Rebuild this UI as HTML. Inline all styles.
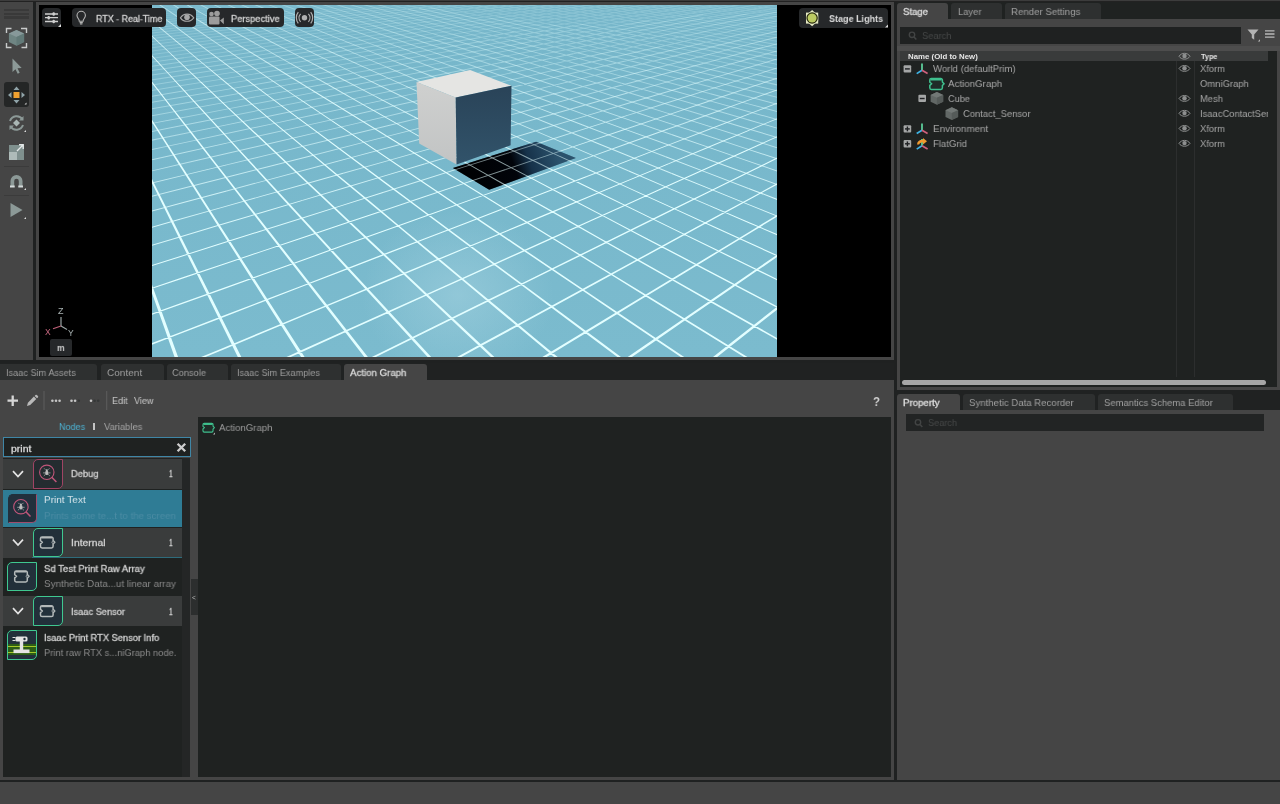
<!DOCTYPE html>
<html lang="en"><head><meta charset="utf-8"><title>Isaac Sim - Action Graph</title>
<style>
*{box-sizing:border-box;margin:0;padding:0}
html,body{width:1280px;height:804px;overflow:hidden;background:#454545;font-family:"Liberation Sans",sans-serif;font-size:10px;color:#c8c8c8}
.a{position:absolute}
.t{position:absolute;white-space:nowrap;transform-origin:0 0;display:block;will-change:transform}
.tab{position:absolute;height:17px;border-radius:3px 3px 0 0;background:#2d2f2f;color:#9a9a9a;font-size:10px;line-height:17px;padding-left:6px;white-space:nowrap}
.tab.on{background:#454545;color:#dcdcdc}
svg{position:absolute;overflow:visible}
</style></head><body>
<!-- window frame / gaps -->
<div class="a" style="left:0;top:0;width:1280px;height:1px;background:#3c3c3c"></div>
<div class="a" style="left:0;top:1px;width:1280px;height:1px;background:#222"></div>
<div class="a" style="left:33px;top:2px;width:3px;height:358px;background:#1f2121"></div>
<div class="a" style="left:0;top:360px;width:897px;height:3px;background:#1f2121"></div>
<div class="a" style="left:894px;top:2px;width:3px;height:780px;background:#1f2121"></div>
<svg class="a" style="left:38px;top:5px" width="853" height="352" viewBox="38 5 853 352">
<defs><clipPath id="vc"><rect x="152" y="5" width="625" height="352"/></clipPath>
<clipPath id="sc"><path d="M452.9 168.1L536.1 141.7L575.9 158.1L489.2 189.8Z"/></clipPath>
<radialGradient id="spec" gradientUnits="userSpaceOnUse" cx="458" cy="295" r="120" gradientTransform="translate(458 295) scale(.8 .7) translate(-458 -295)"><stop offset="0" stop-color="#a4d2e0" stop-opacity=".55"/><stop offset="1" stop-color="#a4d2e0" stop-opacity="0"/></radialGradient>
<linearGradient id="gnd" x1="0" y1="5" x2="0" y2="357" gradientUnits="userSpaceOnUse"><stop offset="0" stop-color="#76b6ca"/><stop offset="1" stop-color="#7bbbce"/></linearGradient>
<linearGradient id="shd" gradientUnits="userSpaceOnUse" x1="471" y1="179" x2="556" y2="150"><stop offset="0" stop-color="#000103"/><stop offset=".5" stop-color="#01040a"/><stop offset=".68" stop-color="#16324a"/><stop offset="1" stop-color="#2b526c"/></linearGradient>
<linearGradient id="cl" gradientUnits="userSpaceOnUse" x1="0" y1="82" x2="0" y2="164"><stop offset="0" stop-color="#cfd0cf"/><stop offset="1" stop-color="#c2c4c4"/></linearGradient>
<linearGradient id="cr" gradientUnits="userSpaceOnUse" x1="0" y1="90" x2="0" y2="164"><stop offset="0" stop-color="#2a4459"/><stop offset="1" stop-color="#31536a"/></linearGradient>
</defs>
<rect x="39" y="5" width="852" height="352" fill="#000"/>
<g clip-path="url(#vc)">
<rect x="152" y="5" width="625" height="352" fill="url(#gnd)"/>
<rect x="152" y="5" width="625" height="352" fill="url(#spec)"/>
<path d="M452.9 168.1L536.1 141.7L575.9 158.1L489.2 189.8Z" fill="url(#shd)"/>
<path d="M656.8 -1.5L701.2 4.7L701.3 3.8L656.9 -2.5ZM669.5 -1.5L709.6 4.0L709.8 3.1L669.6 -2.5ZM682.2 -1.5L718.1 3.3L718.2 2.4L682.3 -2.5ZM718.1 3.3L754.0 8.2L754.1 7.2L718.2 2.4ZM694.9 -1.5L726.6 2.7L726.7 1.7L695.0 -2.5ZM726.6 2.7L758.2 6.9L758.4 5.9L726.7 1.7ZM707.5 -1.5L748.7 3.8L748.9 2.9L707.7 -2.5ZM748.7 3.8L789.9 9.2L790.1 8.3L748.9 2.9ZM720.2 -1.5L755.1 2.9L755.2 2.0L720.3 -2.5ZM755.1 2.9L789.9 7.4L790.1 6.4L755.2 2.0ZM732.9 -1.5L761.4 2.1L761.5 1.1L733.0 -2.5ZM761.4 2.1L789.9 5.6L790.1 4.7L761.5 1.1ZM745.6 -1.5L789.9 3.9L790.1 3.0L745.7 -2.5ZM758.3 -1.5L789.9 2.3L790.1 1.4L758.4 -2.5ZM771.0 -1.5L789.9 0.7L790.1 -0.2L771.1 -2.5ZM178.2 -2.5L140.0 0.6L140.0 1.6L178.3 -1.5ZM195.3 -2.5L167.7 -0.2L167.7 0.8L195.4 -1.5ZM167.7 -0.2L140.0 2.1L140.0 3.1L167.7 0.8ZM212.4 -2.5L176.2 0.6L176.3 1.5L212.5 -1.5ZM176.2 0.6L140.0 3.6L140.0 4.6L176.3 1.5ZM229.5 -2.5L184.7 1.3L184.8 2.3L229.6 -1.5ZM184.7 1.3L140.0 5.2L140.0 6.1L184.8 2.3ZM246.6 -2.5L211.1 0.6L211.2 1.6L246.7 -1.5ZM211.1 0.6L175.5 3.7L175.6 4.6L211.2 1.6ZM175.5 3.7L140.0 6.8L140.0 7.7L175.6 4.6ZM263.7 -2.5L222.5 1.2L222.6 2.1L263.8 -1.5ZM222.5 1.2L181.2 4.8L181.3 5.8L222.6 2.1ZM181.2 4.8L140.0 8.4L140.0 9.4L181.3 5.8ZM280.8 -2.5L245.6 0.7L245.7 1.6L280.9 -1.5ZM245.6 0.7L210.4 3.8L210.5 4.8L245.7 1.6ZM210.4 3.8L175.2 7.0L175.3 8.0L210.5 4.8ZM175.2 7.0L140.0 10.2L140.0 11.1L175.3 8.0ZM297.9 -2.5L258.4 1.1L258.5 2.1L298.0 -1.5ZM258.4 1.1L218.9 4.7L219.0 5.7L258.5 2.1ZM218.9 4.7L179.4 8.3L179.5 9.3L219.0 5.7ZM179.4 8.3L140.0 11.9L140.0 12.9L179.5 9.3ZM315.0 -2.5L271.3 1.6L271.3 2.5L315.1 -1.5ZM271.3 1.6L227.5 5.7L227.6 6.6L271.3 2.5ZM227.5 5.7L183.7 9.7L183.8 10.7L227.6 6.6ZM183.7 9.7L140.0 13.8L140.0 14.7L183.8 10.7ZM332.1 -2.5L293.7 1.2L293.8 2.1L332.2 -1.5ZM293.7 1.2L255.3 4.8L255.3 5.7L293.8 2.1ZM255.3 4.8L216.8 8.4L216.9 9.4L255.3 5.7ZM216.8 8.4L178.4 12.1L178.5 13.0L216.9 9.4ZM178.4 12.1L140.0 15.7L140.0 16.6L178.5 13.0ZM349.2 -2.5L307.4 1.6L307.5 2.5L349.3 -1.5ZM307.4 1.6L265.5 5.6L265.6 6.5L307.5 2.5ZM265.5 5.6L223.7 9.6L223.8 10.6L265.6 6.5ZM223.7 9.6L181.8 13.6L181.9 14.6L223.8 10.6ZM181.8 13.6L140.0 17.7L140.0 18.6L181.9 14.6ZM366.3 -2.5L328.6 1.2L328.7 2.2L366.4 -1.5ZM328.6 1.2L290.9 4.9L291.0 5.9L328.7 2.2ZM290.9 4.9L253.1 8.6L253.2 9.6L291.0 5.9ZM253.1 8.6L215.4 12.3L215.5 13.3L253.2 9.6ZM215.4 12.3L177.7 16.0L177.8 17.0L215.5 13.3ZM177.7 16.0L140.0 19.7L140.0 20.7L177.8 17.0ZM383.4 -2.5L342.8 1.6L342.9 2.5L383.5 -1.5ZM342.8 1.6L302.3 5.6L302.4 6.6L342.9 2.5ZM302.3 5.6L261.7 9.7L261.8 10.6L302.4 6.6ZM261.7 9.7L221.1 13.7L221.2 14.7L261.8 10.6ZM221.1 13.7L180.5 17.8L180.6 18.7L221.2 14.7ZM400.5 -2.5L357.1 2.0L357.2 2.9L400.6 -1.5ZM357.1 2.0L313.7 6.4L313.8 7.3L357.2 2.9ZM313.7 6.4L270.2 10.8L270.3 11.7L313.8 7.3ZM270.2 10.8L226.8 15.2L226.9 16.2L270.3 11.7ZM417.6 -2.5L377.9 1.6L378.0 2.6L417.7 -1.5ZM377.9 1.6L338.3 5.8L338.4 6.7L378.0 2.6ZM338.3 5.8L298.6 9.9L298.7 10.8L338.4 6.7ZM298.6 9.9L258.9 14.0L259.0 15.0L298.7 10.8ZM434.7 -2.5L392.6 2.0L392.7 2.9L434.8 -1.5ZM392.6 2.0L350.5 6.5L350.6 7.4L392.7 2.9ZM350.5 6.5L308.4 10.9L308.5 11.9L350.6 7.4ZM451.8 -2.5L407.2 2.3L407.4 3.3L451.9 -1.5ZM407.2 2.3L362.7 7.2L362.8 8.1L407.4 3.3ZM468.9 -2.5L427.8 2.1L427.9 3.0L469.0 -1.5ZM427.8 2.1L386.7 6.6L386.8 7.6L427.9 3.0ZM486.0 -2.5L442.7 2.4L442.8 3.4L486.1 -1.5ZM503.1 -2.5L462.7 2.2L462.8 3.1L503.2 -1.5ZM520.2 -2.5L477.9 2.5L478.0 3.5L520.3 -1.5Z" fill="#e2feff" fill-opacity="0.10"/><path d="M365.1 -1.5L407.5 9.4L407.8 8.5L365.3 -2.5ZM377.8 -1.5L419.0 8.7L419.2 7.8L378.0 -2.5ZM390.4 -1.5L430.4 8.1L430.6 7.1L390.7 -2.5ZM403.1 -1.5L446.1 8.5L446.3 7.5L403.3 -2.5ZM446.1 8.5L489.1 18.4L489.3 17.5L446.3 7.5ZM415.8 -1.5L457.4 7.8L457.6 6.9L416.0 -2.5ZM457.4 7.8L498.9 17.2L499.1 16.2L457.6 6.9ZM428.5 -1.5L468.7 7.2L468.9 6.3L428.7 -2.5ZM468.7 7.2L508.8 16.0L509.0 15.1L468.9 6.3ZM508.8 16.0L549.0 24.7L549.2 23.8L509.0 15.1ZM441.2 -1.5L484.8 7.7L485.0 6.8L441.4 -2.5ZM484.8 7.7L528.4 16.9L528.6 16.0L485.0 6.8ZM528.4 16.9L572.0 26.1L572.1 25.2L528.6 16.0ZM453.9 -1.5L495.9 7.1L496.1 6.2L454.1 -2.5ZM495.9 7.1L537.9 15.7L538.1 14.8L496.1 6.2ZM537.9 15.7L579.9 24.4L580.1 23.4L538.1 14.8ZM466.6 -1.5L507.0 6.5L507.2 5.6L466.7 -2.5ZM507.0 6.5L547.4 14.6L547.6 13.7L507.2 5.6ZM547.4 14.6L587.8 22.7L588.0 21.8L547.6 13.7ZM587.8 22.7L628.2 30.8L628.4 29.8L588.0 21.8ZM479.2 -1.5L518.1 6.0L518.3 5.1L479.4 -2.5ZM518.1 6.0L556.9 13.6L557.1 12.6L518.3 5.1ZM556.9 13.6L595.7 21.1L595.9 20.2L557.1 12.6ZM595.7 21.1L634.6 28.6L634.8 27.7L595.9 20.2ZM634.6 28.6L673.4 36.2L673.6 35.3L634.8 27.7ZM491.9 -1.5L534.5 6.5L534.7 5.6L492.1 -2.5ZM534.5 6.5L577.1 14.6L577.2 13.6L534.7 5.6ZM577.1 14.6L619.6 22.6L619.8 21.7L577.2 13.6ZM619.6 22.6L662.2 30.7L662.4 29.7L619.8 21.7ZM662.2 30.7L704.8 38.7L704.9 37.8L662.4 29.7ZM504.6 -1.5L545.4 6.0L545.5 5.0L504.8 -2.5ZM545.4 6.0L586.1 13.5L586.3 12.5L545.5 5.0ZM586.1 13.5L626.9 21.0L627.1 20.1L586.3 12.5ZM626.9 21.0L667.6 28.5L667.8 27.6L627.1 20.1ZM667.6 28.5L708.4 36.0L708.6 35.1L667.8 27.6ZM708.4 36.0L749.2 43.5L749.3 42.6L708.6 35.1ZM517.3 -1.5L556.2 5.5L556.4 4.5L517.5 -2.5ZM556.2 5.5L595.2 12.5L595.3 11.5L556.4 4.5ZM595.2 12.5L634.1 19.4L634.3 18.5L595.3 11.5ZM634.1 19.4L673.1 26.4L673.2 25.5L634.3 18.5ZM673.1 26.4L712.0 33.4L712.2 32.5L673.2 25.5ZM712.0 33.4L751.0 40.4L751.1 39.5L712.2 32.5ZM530.0 -1.5L573.3 6.1L573.5 5.1L530.1 -2.5ZM573.3 6.1L616.6 13.6L616.8 12.7L573.5 5.1ZM616.6 13.6L659.9 21.2L660.1 20.3L616.8 12.7ZM659.9 21.2L703.3 28.8L703.4 27.9L660.1 20.3ZM703.3 28.8L746.6 36.4L746.8 35.5L703.4 27.9ZM746.6 36.4L789.9 44.0L790.1 43.0L746.8 35.5ZM542.7 -1.5L583.9 5.5L584.0 4.6L542.8 -2.5ZM583.9 5.5L625.1 12.6L625.2 11.6L584.0 4.6ZM625.1 12.6L666.3 19.6L666.4 18.7L625.2 11.6ZM666.3 19.6L707.5 26.6L707.7 25.7L666.4 18.7ZM707.5 26.6L748.7 33.7L748.9 32.7L707.7 25.7ZM748.7 33.7L789.9 40.7L790.1 39.8L748.9 32.7ZM555.3 -1.5L594.4 5.0L594.6 4.1L555.5 -2.5ZM594.4 5.0L633.5 11.5L633.7 10.6L594.6 4.1ZM633.5 11.5L672.6 18.0L672.8 17.1L633.7 10.6ZM672.6 18.0L711.7 24.6L711.9 23.6L672.8 17.1ZM711.7 24.6L750.8 31.1L751.0 30.1L711.9 23.6ZM750.8 31.1L789.9 37.6L790.1 36.7L751.0 30.1ZM568.0 -1.5L612.4 5.7L612.6 4.8L568.2 -2.5ZM612.4 5.7L656.8 12.9L656.9 12.0L612.6 4.8ZM656.8 12.9L701.2 20.2L701.3 19.2L656.9 12.0ZM701.2 20.2L745.5 27.4L745.7 26.5L701.3 19.2ZM745.5 27.4L789.9 34.6L790.1 33.7L745.7 26.5ZM580.7 -1.5L622.6 5.1L622.7 4.2L580.9 -2.5ZM622.6 5.1L664.4 11.8L664.5 10.9L622.7 4.2ZM664.4 11.8L706.2 18.5L706.4 17.5L664.5 10.9ZM706.2 18.5L748.1 25.1L748.2 24.2L706.4 17.5ZM748.1 25.1L789.9 31.8L790.1 30.9L748.2 24.2ZM593.4 -1.5L632.7 4.6L632.8 3.7L593.5 -2.5ZM632.7 4.6L672.0 10.7L672.2 9.8L632.8 3.7ZM672.0 10.7L711.3 16.8L711.5 15.9L672.2 9.8ZM711.3 16.8L750.6 23.0L750.8 22.0L711.5 15.9ZM750.6 23.0L789.9 29.1L790.1 28.2L750.8 22.0ZM606.1 -1.5L642.8 4.1L643.0 3.1L606.2 -2.5ZM642.8 4.1L679.6 9.7L679.8 8.7L643.0 3.1ZM679.6 9.7L716.4 15.3L716.5 14.4L679.8 8.7ZM716.4 15.3L753.2 20.9L753.3 20.0L716.5 14.4ZM753.2 20.9L789.9 26.5L790.1 25.6L753.3 20.0ZM618.8 -1.5L661.6 4.9L661.7 3.9L618.9 -2.5ZM661.6 4.9L704.3 11.2L704.5 10.3L661.7 3.9ZM704.3 11.2L747.1 17.6L747.3 16.7L704.5 10.3ZM747.1 17.6L789.9 24.0L790.1 23.1L747.3 16.7ZM631.4 -1.5L671.1 4.3L671.2 3.3L631.6 -2.5ZM671.1 4.3L710.7 10.1L710.8 9.1L671.2 3.3ZM710.7 10.1L750.3 15.9L750.4 14.9L710.8 9.1ZM750.3 15.9L789.9 21.6L790.1 20.7L750.4 14.9ZM644.1 -1.5L680.6 3.7L680.7 2.8L644.3 -2.5ZM680.6 3.7L717.0 8.9L717.2 8.0L680.7 2.8ZM717.0 8.9L753.5 14.1L753.6 13.2L717.2 8.0ZM753.5 14.1L789.9 19.4L790.1 18.4L753.6 13.2ZM701.2 4.7L745.6 10.9L745.7 10.0L701.3 3.8ZM745.6 10.9L789.9 17.2L790.1 16.2L745.7 10.0ZM709.6 4.0L749.8 9.5L749.9 8.6L709.8 3.1ZM749.8 9.5L789.9 15.1L790.1 14.1L749.9 8.6ZM754.0 8.2L789.9 13.0L790.1 12.1L754.1 7.2ZM758.2 6.9L789.9 11.1L790.1 10.1L758.4 5.9ZM180.5 17.8L140.0 21.9L140.0 22.8L180.6 18.7ZM226.8 15.2L183.4 19.6L183.5 20.6L226.9 16.2ZM183.4 19.6L140.0 24.1L140.0 25.0L183.5 20.6ZM258.9 14.0L219.3 18.1L219.4 19.1L259.0 15.0ZM219.3 18.1L179.6 22.3L179.7 23.2L219.4 19.1ZM179.6 22.3L140.0 26.4L140.0 27.3L179.7 23.2ZM308.4 10.9L266.3 15.4L266.4 16.3L308.5 11.9ZM266.3 15.4L224.2 19.8L224.3 20.8L266.4 16.3ZM224.2 19.8L182.1 24.3L182.2 25.2L224.3 20.8ZM182.1 24.3L139.9 28.8L140.1 29.7L182.2 25.2ZM362.7 7.2L318.1 12.0L318.3 12.9L362.8 8.1ZM318.1 12.0L273.6 16.8L273.7 17.7L318.3 12.9ZM273.6 16.8L229.0 21.6L229.2 22.6L273.7 17.7ZM229.0 21.6L184.5 26.4L184.6 27.4L229.2 22.6ZM184.5 26.4L139.9 31.3L140.1 32.2L184.6 27.4ZM386.7 6.6L345.5 11.1L345.6 12.1L386.8 7.6ZM345.5 11.1L304.4 15.7L304.5 16.6L345.6 12.1ZM304.4 15.7L263.3 20.2L263.4 21.2L304.5 16.6ZM263.3 20.2L222.2 24.8L222.3 25.7L263.4 21.2ZM222.2 24.8L181.1 29.3L181.2 30.3L222.3 25.7ZM181.1 29.3L139.9 33.9L140.1 34.8L181.2 30.3ZM442.7 2.4L399.5 7.3L399.6 8.2L442.8 3.4ZM399.5 7.3L356.2 12.2L356.3 13.1L399.6 8.2ZM356.2 12.2L313.0 17.0L313.1 18.0L356.3 13.1ZM313.0 17.0L269.7 21.9L269.8 22.9L313.1 18.0ZM269.7 21.9L226.5 26.8L226.6 27.7L269.8 22.9ZM226.5 26.8L183.2 31.7L183.3 32.6L226.6 27.7ZM183.2 31.7L139.9 36.6L140.1 37.5L183.3 32.6ZM462.7 2.2L422.4 6.8L422.5 7.8L462.8 3.1ZM422.4 6.8L382.0 11.5L382.2 12.4L422.5 7.8ZM382.0 11.5L341.7 16.1L341.8 17.1L382.2 12.4ZM341.7 16.1L301.3 20.8L301.5 21.7L341.8 17.1ZM301.3 20.8L261.0 25.4L261.1 26.4L301.5 21.7ZM261.0 25.4L220.6 30.1L220.8 31.0L261.1 26.4ZM220.6 30.1L180.3 34.7L180.4 35.7L220.8 31.0ZM180.3 34.7L139.9 39.4L140.1 40.3L180.4 35.7ZM477.9 2.5L435.7 7.5L435.8 8.4L478.0 3.5ZM435.7 7.5L393.4 12.5L393.6 13.4L435.8 8.4ZM393.4 12.5L351.2 17.4L351.3 18.4L393.6 13.4ZM351.2 17.4L308.9 22.4L309.1 23.4L351.3 18.4ZM308.9 22.4L266.7 27.4L266.8 28.3L309.1 23.4ZM266.7 27.4L224.4 32.4L224.6 33.3L266.8 28.3ZM224.4 32.4L182.2 37.4L182.3 38.3L224.6 33.3ZM182.2 37.4L139.9 42.3L140.1 43.3L182.3 38.3ZM537.3 -2.5L493.1 2.8L493.2 3.8L537.4 -1.5ZM493.1 2.8L449.0 8.2L449.1 9.1L493.2 3.8ZM449.0 8.2L404.8 13.5L405.0 14.4L449.1 9.1ZM404.8 13.5L360.7 18.8L360.8 19.8L405.0 14.4ZM360.7 18.8L316.5 24.1L316.7 25.1L360.8 19.8ZM316.5 24.1L272.4 29.5L272.5 30.4L316.7 25.1ZM272.4 29.5L228.2 34.8L228.4 35.7L272.5 30.4ZM228.2 34.8L184.1 40.1L184.2 41.0L228.4 35.7ZM184.1 40.1L139.9 45.4L140.1 46.4L184.2 41.0ZM554.4 -2.5L512.9 2.6L513.1 3.6L554.5 -1.5ZM512.9 2.6L471.5 7.8L471.6 8.7L513.1 3.6ZM471.5 7.8L430.0 12.9L430.2 13.8L471.6 8.7ZM430.0 12.9L388.6 18.0L388.7 18.9L430.2 13.8ZM388.6 18.0L347.2 23.1L347.3 24.0L388.7 18.9ZM347.2 23.1L305.7 28.2L305.8 29.1L347.3 24.0ZM305.7 28.2L264.3 33.3L264.4 34.3L305.8 29.1ZM264.3 33.3L222.8 38.4L222.9 39.4L264.4 34.3ZM222.8 38.4L181.4 43.5L181.5 44.5L222.9 39.4ZM181.4 43.5L139.9 48.7L140.1 49.6L181.5 44.5ZM571.5 -2.5L528.3 3.0L528.4 3.9L571.6 -1.5ZM528.3 3.0L485.2 8.4L485.3 9.4L528.4 3.9ZM485.2 8.4L442.0 13.9L442.1 14.8L485.3 9.4ZM442.0 13.9L398.9 19.3L399.0 20.3L442.1 14.8ZM398.9 19.3L355.7 24.8L355.8 25.7L399.0 20.3ZM355.7 24.8L312.6 30.2L312.7 31.2L355.8 25.7ZM312.6 30.2L269.4 35.7L269.5 36.6L312.7 31.2ZM269.4 35.7L226.2 41.1L226.4 42.1L269.5 36.6ZM226.2 41.1L183.1 46.6L183.2 47.5L226.4 42.1ZM183.1 46.6L139.9 52.0L140.1 53.0L183.2 47.5ZM588.6 -2.5L547.8 2.8L547.9 3.7L588.7 -1.5ZM547.8 2.8L507.0 8.1L507.1 9.0L547.9 3.7ZM507.0 8.1L466.2 13.4L466.3 14.3L507.1 9.0ZM466.2 13.4L425.4 18.6L425.6 19.6L466.3 14.3ZM425.4 18.6L384.6 23.9L384.8 24.9L425.6 19.6ZM384.6 23.9L343.9 29.2L344.0 30.1L384.8 24.9ZM343.9 29.2L303.1 34.5L303.2 35.4L344.0 30.1ZM303.1 34.5L262.3 39.8L262.4 40.7L303.2 35.4ZM262.3 39.8L221.5 45.0L221.6 46.0L262.4 40.7ZM221.5 45.0L180.7 50.3L180.8 51.3L221.6 46.0ZM180.7 50.3L139.9 55.6L140.1 56.5L180.8 51.3ZM605.7 -2.5L563.3 3.1L563.5 4.1L605.8 -1.5ZM563.3 3.1L521.0 8.8L521.1 9.7L563.5 4.1ZM521.0 8.8L478.7 14.4L478.8 15.3L521.1 9.7ZM478.7 14.4L436.3 20.0L436.4 20.9L478.8 15.3ZM436.3 20.0L394.0 25.6L394.1 26.6L436.4 20.9ZM394.0 25.6L351.6 31.2L351.8 32.2L394.1 26.6ZM351.6 31.2L309.3 36.9L309.4 37.8L351.8 32.2ZM309.3 36.9L267.0 42.5L267.1 43.4L309.4 37.8ZM267.0 42.5L224.6 48.1L224.7 49.0L267.1 43.4ZM224.6 48.1L182.3 53.7L182.4 54.7L224.7 49.0ZM182.3 53.7L139.9 59.3L140.1 60.3L182.4 54.7ZM622.8 -2.5L578.9 3.5L579.0 4.4L622.9 -1.5ZM578.9 3.5L535.0 9.5L535.1 10.4L579.0 4.4ZM535.0 9.5L491.1 15.5L491.2 16.4L535.1 10.4ZM491.1 15.5L447.2 21.4L447.3 22.4L491.2 16.4ZM447.2 21.4L403.3 27.4L403.4 28.3L447.3 22.4ZM403.3 27.4L359.4 33.4L359.5 34.3L403.4 28.3ZM359.4 33.4L315.5 39.4L315.6 40.3L359.5 34.3ZM315.5 39.4L271.6 45.3L271.7 46.3L315.6 40.3ZM271.6 45.3L227.7 51.3L227.9 52.2L271.7 46.3ZM227.7 51.3L183.8 57.3L184.0 58.2L227.9 52.2ZM639.9 -2.5L598.2 3.4L598.3 4.3L640.0 -1.5ZM598.2 3.4L556.5 9.2L556.7 10.1L598.3 4.3ZM556.5 9.2L514.9 15.0L515.0 15.9L556.7 10.1ZM514.9 15.0L473.2 20.8L473.4 21.8L515.0 15.9ZM473.2 20.8L431.6 26.6L431.7 27.6L473.4 21.8ZM431.6 26.6L389.9 32.5L390.0 33.4L431.7 27.6ZM389.9 32.5L348.2 38.3L348.4 39.2L390.0 33.4ZM348.2 38.3L306.6 44.1L306.7 45.0L348.4 39.2ZM306.6 44.1L264.9 49.9L265.0 50.9L306.7 45.0ZM657.0 -2.5L613.9 3.7L614.0 4.7L657.1 -1.5ZM613.9 3.7L570.8 9.9L570.9 10.8L614.0 4.7ZM570.8 9.9L527.7 16.1L527.8 17.0L570.9 10.8ZM527.7 16.1L484.6 22.3L484.8 23.2L527.8 17.0ZM484.6 22.3L441.5 28.5L441.7 29.4L484.8 23.2ZM441.5 28.5L398.4 34.6L398.6 35.6L441.7 29.4ZM398.4 34.6L355.4 40.8L355.5 41.8L398.6 35.6ZM355.4 40.8L312.3 47.0L312.4 47.9L355.5 41.8ZM674.1 -2.5L629.5 4.1L629.7 5.0L674.2 -1.5ZM629.5 4.1L585.0 10.7L585.2 11.6L629.7 5.0ZM585.0 10.7L540.5 17.2L540.7 18.2L585.2 11.6ZM540.5 17.2L496.0 23.8L496.2 24.7L540.7 18.2ZM496.0 23.8L451.5 30.4L451.6 31.3L496.2 24.7ZM451.5 30.4L407.0 36.9L407.1 37.9L451.6 31.3ZM407.0 36.9L362.5 43.5L362.6 44.4L407.1 37.9ZM691.2 -2.5L648.7 4.0L648.9 4.9L691.3 -1.5ZM648.7 4.0L606.3 10.4L606.5 11.3L648.9 4.9ZM606.3 10.4L563.9 16.8L564.1 17.8L606.5 11.3ZM563.9 16.8L521.5 23.3L521.7 24.2L564.1 17.8ZM521.5 23.3L479.1 29.7L479.3 30.7L521.7 24.2ZM479.1 29.7L436.7 36.2L436.9 37.1L479.3 30.7ZM436.7 36.2L394.3 42.6L394.5 43.5L436.9 37.1ZM708.2 -2.5L664.5 4.4L664.7 5.3L708.4 -1.5ZM664.5 4.4L620.8 11.2L621.0 12.1L664.7 5.3ZM620.8 11.2L577.1 18.0L577.2 19.0L621.0 12.1ZM577.1 18.0L533.4 24.9L533.5 25.8L577.2 19.0ZM533.4 24.9L489.7 31.7L489.8 32.6L533.5 25.8ZM489.7 31.7L445.9 38.5L446.1 39.5L489.8 32.6ZM725.3 -2.5L683.5 4.3L683.7 5.2L725.5 -1.5ZM683.5 4.3L641.7 11.0L641.9 11.9L683.7 5.2ZM641.7 11.0L599.9 17.7L600.0 18.7L641.9 11.9ZM599.9 17.7L558.1 24.5L558.2 25.4L600.0 18.7ZM558.1 24.5L516.3 31.2L516.4 32.2L558.2 25.4ZM742.4 -2.5L699.4 4.7L699.6 5.6L742.6 -1.5ZM699.4 4.7L656.4 11.8L656.5 12.8L699.6 5.6ZM656.4 11.8L613.3 19.0L613.5 19.9L656.5 12.8ZM613.3 19.0L570.3 26.1L570.4 27.1L613.5 19.9ZM759.5 -2.5L715.3 5.1L715.4 6.1L759.7 -1.5ZM715.3 5.1L671.0 12.7L671.2 13.7L715.4 6.1ZM671.0 12.7L626.8 20.3L626.9 21.3L671.2 13.7ZM626.8 20.3L582.5 27.9L582.7 28.9L626.9 21.3ZM776.6 -2.5L734.2 5.1L734.3 6.0L776.8 -1.5ZM734.2 5.1L691.7 12.6L691.9 13.5L734.3 6.0ZM691.7 12.6L649.3 20.1L649.5 21.1L691.9 13.5ZM789.9 -1.8L746.6 6.2L746.8 7.1L790.1 -0.8ZM746.6 6.2L703.2 14.1L703.4 15.1L746.8 7.1ZM789.9 1.5L746.6 9.8L746.8 10.7L790.1 2.4ZM746.6 9.8L703.2 18.0L703.4 18.9L746.8 10.7ZM789.9 5.0L746.6 13.6L746.8 14.5L790.1 6.0Z" fill="#e2feff" fill-opacity="0.20"/><path d="M250.9 -1.6L292.3 14.3L292.7 13.4L251.2 -2.4ZM263.6 -1.6L304.0 13.2L304.4 12.3L263.9 -2.4ZM276.3 -1.6L315.8 12.1L316.1 11.2L276.6 -2.4ZM288.9 -1.5L330.7 12.2L331.0 11.3L289.2 -2.5ZM330.7 12.2L372.4 26.0L372.7 25.1L331.0 11.3ZM301.6 -1.5L342.3 11.3L342.6 10.4L301.9 -2.5ZM342.3 11.3L383.0 24.1L383.3 23.2L342.6 10.4ZM314.3 -1.5L353.9 10.4L354.2 9.5L314.6 -2.5ZM353.9 10.4L393.6 22.4L393.9 21.4L354.2 9.5ZM393.6 22.4L433.2 34.3L433.5 33.4L393.9 21.4ZM327.0 -1.5L369.1 10.6L369.3 9.7L327.3 -2.5ZM369.1 10.6L411.2 22.8L411.4 21.9L369.3 9.7ZM411.2 22.8L453.2 35.0L453.5 34.1L411.4 21.9ZM339.7 -1.5L380.6 9.8L380.9 8.9L339.9 -2.5ZM380.6 9.8L421.5 21.2L421.8 20.3L380.9 8.9ZM421.5 21.2L462.5 32.6L462.7 31.7L421.8 20.3ZM462.5 32.6L503.4 44.0L503.7 43.0L462.7 31.7ZM352.4 -1.5L392.2 9.1L392.4 8.2L352.6 -2.5ZM392.2 9.1L431.9 19.7L432.2 18.8L392.4 8.2ZM431.9 19.7L471.7 30.4L471.9 29.5L432.2 18.8ZM471.7 30.4L511.5 41.0L511.7 40.1L471.9 29.5ZM407.5 9.4L450.0 20.4L450.3 19.4L407.8 8.5ZM450.0 20.4L492.5 31.3L492.7 30.4L450.3 19.4ZM492.5 31.3L535.0 42.3L535.2 41.3L492.7 30.4ZM535.0 42.3L577.5 53.2L577.7 52.3L535.2 41.3ZM419.0 8.7L460.2 19.0L460.4 18.0L419.2 7.8ZM460.2 19.0L501.4 29.2L501.6 28.3L460.4 18.0ZM501.4 29.2L542.6 39.5L542.8 38.5L501.6 28.3ZM542.6 39.5L583.8 49.7L584.0 48.8L542.8 38.5ZM583.8 49.7L625.0 60.0L625.3 59.0L584.0 48.8ZM430.4 8.1L470.3 17.7L470.6 16.7L430.6 7.1ZM470.3 17.7L510.3 27.3L510.5 26.3L470.6 16.7ZM510.3 27.3L550.2 36.9L550.4 35.9L510.5 26.3ZM550.2 36.9L590.2 46.5L590.4 45.5L550.4 35.9ZM590.2 46.5L630.1 56.1L630.3 55.1L590.4 45.5ZM489.1 18.4L532.0 28.4L532.3 27.5L489.3 17.5ZM532.0 28.4L575.0 38.4L575.2 37.5L532.3 27.5ZM575.0 38.4L618.0 48.4L618.2 47.5L575.2 37.5ZM618.0 48.4L661.0 58.4L661.2 57.5L618.2 47.5ZM661.0 58.4L703.9 68.4L704.2 67.5L661.2 57.5ZM498.9 17.2L540.5 26.5L540.7 25.6L499.1 16.2ZM540.5 26.5L582.1 35.9L582.3 35.0L540.7 25.6ZM582.1 35.9L623.6 45.2L623.8 44.3L582.3 35.0ZM623.6 45.2L665.2 54.6L665.4 53.7L623.8 44.3ZM665.2 54.6L706.8 63.9L707.0 63.0L665.4 53.7ZM706.8 63.9L748.3 73.3L748.5 72.4L707.0 63.0ZM549.0 24.7L589.1 33.5L589.3 32.6L549.2 23.8ZM589.1 33.5L629.3 42.3L629.5 41.3L589.3 32.6ZM629.3 42.3L669.4 51.0L669.6 50.1L629.5 41.3ZM669.4 51.0L709.6 59.8L709.8 58.9L669.6 50.1ZM709.6 59.8L749.7 68.5L749.9 67.6L709.8 58.9ZM749.7 68.5L789.9 77.3L790.1 76.4L749.9 67.6ZM572.0 26.1L615.5 35.4L615.7 34.4L572.1 25.2ZM615.5 35.4L659.1 44.6L659.3 43.7L615.7 34.4ZM659.1 44.6L702.7 53.8L702.9 52.9L659.3 43.7ZM702.7 53.8L746.3 63.0L746.5 62.1L702.9 52.9ZM746.3 63.0L789.9 72.3L790.1 71.3L746.5 62.1ZM579.9 24.4L621.9 33.0L622.1 32.1L580.1 23.4ZM621.9 33.0L663.9 41.6L664.1 40.7L622.1 32.1ZM663.9 41.6L705.9 50.3L706.1 49.3L664.1 40.7ZM705.9 50.3L747.9 58.9L748.1 58.0L706.1 49.3ZM747.9 58.9L789.9 67.5L790.1 66.6L748.1 58.0ZM628.2 30.8L668.6 38.8L668.8 37.9L628.4 29.8ZM668.6 38.8L709.1 46.9L709.3 46.0L668.8 37.9ZM709.1 46.9L749.5 55.0L749.7 54.0L709.3 46.0ZM749.5 55.0L789.9 63.0L790.1 62.1L749.7 54.0ZM673.4 36.2L712.2 43.7L712.4 42.8L673.6 35.3ZM712.2 43.7L751.1 51.3L751.3 50.3L712.4 42.8ZM751.1 51.3L789.9 58.8L790.1 57.9L751.3 50.3ZM704.8 38.7L747.3 46.8L747.5 45.8L704.9 37.8ZM747.3 46.8L789.9 54.8L790.1 53.9L747.5 45.8ZM749.2 43.5L789.9 51.0L790.1 50.1L749.3 42.6ZM751.0 40.4L789.9 47.4L790.1 46.5L751.1 39.5ZM183.8 57.3L139.9 63.3L140.1 64.2L184.0 58.2ZM264.9 49.9L223.3 55.7L223.4 56.7L265.0 50.9ZM223.3 55.7L181.6 61.6L181.7 62.5L223.4 56.7ZM181.6 61.6L139.9 67.4L140.1 68.3L181.7 62.5ZM312.3 47.0L269.2 53.2L269.3 54.1L312.4 47.9ZM269.2 53.2L226.1 59.4L226.2 60.3L269.3 54.1ZM226.1 59.4L183.0 65.6L183.2 66.5L226.2 60.3ZM183.0 65.6L139.9 71.7L140.1 72.7L183.2 66.5ZM362.5 43.5L318.0 50.1L318.1 51.0L362.6 44.4ZM318.0 50.1L273.5 56.6L273.6 57.6L318.1 51.0ZM273.5 56.6L229.0 63.2L229.1 64.2L273.6 57.6ZM229.0 63.2L184.4 69.8L184.6 70.7L229.1 64.2ZM184.4 69.8L139.9 76.4L140.1 77.3L184.6 70.7ZM394.3 42.6L351.9 49.0L352.1 50.0L394.5 43.5ZM351.9 49.0L309.5 55.5L309.7 56.4L352.1 50.0ZM309.5 55.5L267.1 61.9L267.3 62.8L309.7 56.4ZM267.1 61.9L224.7 68.3L224.9 69.3L267.3 62.8ZM224.7 68.3L182.3 74.8L182.5 75.7L224.9 69.3ZM182.3 74.8L139.9 81.2L140.1 82.2L182.5 75.7ZM445.9 38.5L402.2 45.4L402.4 46.3L446.1 39.5ZM402.2 45.4L358.5 52.2L358.7 53.1L402.4 46.3ZM358.5 52.2L314.8 59.0L314.9 60.0L358.7 53.1ZM314.8 59.0L271.1 65.9L271.2 66.8L314.9 60.0ZM271.1 65.9L227.4 72.7L227.5 73.6L271.2 66.8ZM227.4 72.7L183.6 79.5L183.8 80.5L227.5 73.6ZM183.6 79.5L139.9 86.4L140.1 87.3L183.8 80.5ZM516.3 31.2L474.4 38.0L474.6 38.9L516.4 32.2ZM474.4 38.0L432.6 44.7L432.8 45.6L474.6 38.9ZM432.6 44.7L390.8 51.4L391.0 52.4L432.8 45.6ZM390.8 51.4L349.0 58.2L349.2 59.1L391.0 52.4ZM349.0 58.2L307.2 64.9L307.3 65.8L349.2 59.1ZM307.2 64.9L265.4 71.6L265.5 72.6L307.3 65.8ZM265.4 71.6L223.6 78.4L223.7 79.3L265.5 72.6ZM223.6 78.4L181.7 85.1L181.9 86.1L223.7 79.3ZM181.7 85.1L139.9 91.9L140.1 92.8L181.9 86.1ZM570.3 26.1L527.3 33.3L527.4 34.2L570.4 27.1ZM527.3 33.3L484.2 40.5L484.4 41.4L527.4 34.2ZM484.2 40.5L441.2 47.6L441.3 48.5L484.4 41.4ZM441.2 47.6L398.1 54.8L398.3 55.7L441.3 48.5ZM398.1 54.8L355.1 61.9L355.3 62.8L398.3 55.7ZM355.1 61.9L312.1 69.1L312.2 70.0L355.3 62.8ZM312.1 69.1L269.0 76.2L269.2 77.2L312.2 70.0ZM269.0 76.2L226.0 83.4L226.2 84.3L269.2 77.2ZM226.0 83.4L183.0 90.5L183.1 91.5L226.2 84.3ZM582.5 27.9L538.2 35.5L538.4 36.4L582.7 28.9ZM538.2 35.5L494.0 43.1L494.1 44.0L538.4 36.4ZM494.0 43.1L449.7 50.7L449.9 51.6L494.1 44.0ZM449.7 50.7L405.5 58.3L405.6 59.2L449.9 51.6ZM405.5 58.3L361.2 65.9L361.4 66.8L405.6 59.2ZM361.2 65.9L317.0 73.5L317.1 74.4L361.4 66.8ZM317.0 73.5L272.7 81.1L272.9 82.0L317.1 74.4ZM649.3 20.1L606.8 27.7L607.0 28.6L649.5 21.1ZM606.8 27.7L564.4 35.2L564.6 36.1L607.0 28.6ZM564.4 35.2L521.9 42.7L522.1 43.7L564.6 36.1ZM521.9 42.7L479.5 50.2L479.7 51.2L522.1 43.7ZM479.5 50.2L437.0 57.8L437.2 58.7L479.7 51.2ZM437.0 57.8L394.6 65.3L394.8 66.2L437.2 58.7ZM394.6 65.3L352.2 72.8L352.3 73.8L394.8 66.2ZM703.2 14.1L659.9 22.1L660.1 23.0L703.4 15.1ZM659.9 22.1L616.6 30.1L616.8 31.0L660.1 23.0ZM616.6 30.1L573.2 38.0L573.4 38.9L616.8 31.0ZM573.2 38.0L529.9 46.0L530.1 46.9L573.4 38.9ZM529.9 46.0L486.6 53.9L486.8 54.9L530.1 46.9ZM486.6 53.9L443.2 61.9L443.4 62.8L486.8 54.9ZM443.2 61.9L399.9 69.8L400.1 70.8L443.4 62.8ZM703.2 18.0L659.9 26.2L660.1 27.2L703.4 18.9ZM659.9 26.2L616.6 34.5L616.8 35.4L660.1 27.2ZM616.6 34.5L573.2 42.7L573.4 43.7L616.8 35.4ZM573.2 42.7L529.9 51.0L530.1 51.9L573.4 43.7ZM529.9 51.0L486.6 59.2L486.8 60.1L530.1 51.9ZM486.6 59.2L443.2 67.5L443.4 68.4L486.8 60.1ZM746.6 13.6L703.2 22.1L703.4 23.1L746.8 14.5ZM703.2 22.1L659.9 30.7L660.1 31.6L703.4 23.1ZM659.9 30.7L616.6 39.2L616.8 40.2L660.1 31.6ZM616.6 39.2L573.2 47.8L573.4 48.7L616.8 40.2ZM573.2 47.8L529.9 56.4L530.1 57.3L573.4 48.7ZM789.9 8.8L746.6 17.7L746.8 18.7L790.1 9.8ZM746.6 17.7L703.2 26.6L703.4 27.5L746.8 18.7ZM703.2 26.6L659.9 35.5L660.1 36.4L703.4 27.5ZM659.9 35.5L616.6 44.4L616.8 45.3L660.1 36.4ZM616.6 44.4L573.2 53.3L573.4 54.2L616.8 45.3ZM789.9 12.9L746.6 22.2L746.8 23.1L790.1 13.9ZM746.6 22.2L703.2 31.4L703.4 32.4L746.8 23.1ZM703.2 31.4L659.9 40.7L660.1 41.6L703.4 32.4ZM659.9 40.7L616.6 49.9L616.8 50.9L660.1 41.6ZM789.9 17.4L746.6 27.0L746.8 28.0L790.1 18.3ZM746.6 27.0L703.2 36.7L703.4 37.6L746.8 28.0ZM703.2 36.7L659.9 46.3L660.1 47.2L703.4 37.6ZM789.9 22.2L746.6 32.3L746.8 33.2L790.1 23.2ZM746.6 32.3L703.2 42.4L703.4 43.3L746.8 33.2Z" fill="#e2feff" fill-opacity="0.30"/><path d="M187.4 -1.6L225.1 18.2L225.5 17.3L187.9 -2.4ZM200.1 -1.6L239.4 17.6L239.8 16.8L200.5 -2.4ZM212.8 -1.6L251.3 16.0L251.7 15.1L213.2 -2.4ZM225.5 -1.6L265.8 15.7L266.2 14.9L225.9 -2.4ZM265.8 15.7L306.1 33.0L306.5 32.2L266.2 14.9ZM238.2 -1.6L277.6 14.4L277.9 13.5L238.5 -2.4ZM277.6 14.4L317.0 30.3L317.3 29.5L277.9 13.5ZM292.3 14.3L333.8 30.2L334.1 29.3L292.7 13.4ZM333.8 30.2L375.3 46.1L375.6 45.2L334.1 29.3ZM304.0 13.2L344.5 27.9L344.9 27.0L304.4 12.3ZM344.5 27.9L385.0 42.6L385.3 41.7L344.9 27.0ZM315.8 12.1L355.3 25.8L355.6 24.9L316.1 11.2ZM355.3 25.8L394.8 39.4L395.1 38.5L355.6 24.9ZM394.8 39.4L434.3 53.1L434.6 52.2L395.1 38.5ZM372.4 26.0L414.2 39.7L414.5 38.8L372.7 25.1ZM414.2 39.7L455.9 53.5L456.2 52.6L414.5 38.8ZM455.9 53.5L497.7 67.2L498.0 66.3L456.2 52.6ZM383.0 24.1L423.7 36.9L424.0 36.0L383.3 23.2ZM423.7 36.9L464.4 49.7L464.7 48.8L424.0 36.0ZM464.4 49.7L505.1 62.5L505.3 61.6L464.7 48.8ZM433.2 34.3L472.8 46.3L473.1 45.3L433.5 33.4ZM472.8 46.3L512.5 58.2L512.7 57.3L473.1 45.3ZM512.5 58.2L552.1 70.2L552.4 69.2L512.7 57.3ZM453.2 35.0L495.3 47.1L495.6 46.2L453.5 34.1ZM495.3 47.1L537.4 59.3L537.7 58.4L495.6 46.2ZM537.4 59.3L579.5 71.5L579.7 70.6L537.7 58.4ZM579.5 71.5L621.6 83.7L621.8 82.7L579.7 70.6ZM503.4 44.0L544.3 55.3L544.6 54.4L503.7 43.0ZM544.3 55.3L585.2 66.7L585.5 65.8L544.6 54.4ZM585.2 66.7L626.2 78.1L626.4 77.2L585.5 65.8ZM626.2 78.1L667.1 89.5L667.4 88.5L626.4 77.2ZM511.5 41.0L551.2 51.6L551.5 50.7L511.7 40.1ZM551.2 51.6L591.0 62.3L591.3 61.4L551.5 50.7ZM591.0 62.3L630.8 72.9L631.0 72.0L591.3 61.4ZM630.8 72.9L670.6 83.6L670.8 82.6L631.0 72.0ZM670.6 83.6L710.3 94.2L710.6 93.3L670.8 82.6ZM577.5 53.2L620.0 64.2L620.2 63.2L577.7 52.3ZM620.0 64.2L662.4 75.1L662.7 74.2L620.2 63.2ZM662.4 75.1L704.9 86.1L705.2 85.1L662.7 74.2ZM704.9 86.1L747.4 97.0L747.6 96.1L705.2 85.1ZM625.0 60.0L666.2 70.2L666.5 69.3L625.3 59.0ZM666.2 70.2L707.5 80.5L707.7 79.5L666.5 69.3ZM707.5 80.5L748.7 90.7L748.9 89.8L707.7 79.5ZM748.7 90.7L789.9 101.0L790.1 100.0L748.9 89.8ZM630.1 56.1L670.1 65.6L670.3 64.7L630.3 55.1ZM670.1 65.6L710.0 75.2L710.2 74.3L670.3 64.7ZM710.0 75.2L749.9 84.8L750.2 83.9L710.2 74.3ZM749.9 84.8L789.9 94.4L790.1 93.5L750.2 83.9ZM703.9 68.4L746.9 78.4L747.1 77.4L704.2 67.5ZM746.9 78.4L789.9 88.4L790.1 87.4L747.1 77.4ZM748.3 73.3L789.9 82.7L790.1 81.7L748.5 72.4ZM183.0 90.5L139.9 97.7L140.1 98.6L183.1 91.5ZM272.7 81.1L228.4 88.7L228.6 89.6L272.9 82.0ZM228.4 88.7L184.2 96.3L184.3 97.2L228.6 89.6ZM184.2 96.3L139.9 103.9L140.1 104.8L184.3 97.2ZM352.2 72.8L309.7 80.4L309.9 81.3L352.3 73.8ZM309.7 80.4L267.3 87.9L267.4 88.8L309.9 81.3ZM267.3 87.9L224.8 95.4L225.0 96.4L267.4 88.8ZM224.8 95.4L182.4 103.0L182.5 103.9L225.0 96.4ZM182.4 103.0L139.9 110.5L140.1 111.4L182.5 103.9ZM399.9 69.8L356.6 77.8L356.8 78.7L400.1 70.8ZM356.6 77.8L313.2 85.7L313.4 86.7L356.8 78.7ZM313.2 85.7L269.9 93.7L270.1 94.6L313.4 86.7ZM269.9 93.7L226.6 101.7L226.8 102.6L270.1 94.6ZM226.6 101.7L183.2 109.6L183.4 110.6L226.8 102.6ZM183.2 109.6L139.9 117.6L140.1 118.5L183.4 110.6ZM443.2 67.5L399.9 75.7L400.1 76.6L443.4 68.4ZM399.9 75.7L356.6 83.9L356.8 84.9L400.1 76.6ZM356.6 83.9L313.2 92.2L313.4 93.1L356.8 84.9ZM313.2 92.2L269.9 100.4L270.1 101.4L313.4 93.1ZM269.9 100.4L226.6 108.7L226.8 109.6L270.1 101.4ZM226.6 108.7L183.2 116.9L183.4 117.9L226.8 109.6ZM529.9 56.4L486.6 64.9L486.8 65.8L530.1 57.3ZM486.6 64.9L443.2 73.5L443.4 74.4L486.8 65.8ZM443.2 73.5L399.9 82.0L400.1 82.9L443.4 74.4ZM399.9 82.0L356.6 90.6L356.8 91.5L400.1 82.9ZM356.6 90.6L313.2 99.1L313.4 100.0L356.8 91.5ZM313.2 99.1L269.9 107.7L270.1 108.6L313.4 100.0ZM269.9 107.7L226.6 116.2L226.8 117.2L270.1 108.6ZM573.2 53.3L529.9 62.2L530.1 63.1L573.4 54.2ZM529.9 62.2L486.6 71.0L486.8 72.0L530.1 63.1ZM486.6 71.0L443.2 79.9L443.4 80.9L486.8 72.0ZM443.2 79.9L399.9 88.8L400.1 89.7L443.4 80.9ZM399.9 88.8L356.6 97.7L356.8 98.6L400.1 89.7ZM356.6 97.7L313.2 106.6L313.4 107.5L356.8 98.6ZM616.6 49.9L573.2 59.2L573.4 60.1L616.8 50.9ZM573.2 59.2L529.9 68.4L530.1 69.3L573.4 60.1ZM529.9 68.4L486.6 77.7L486.8 78.6L530.1 69.3ZM486.6 77.7L443.2 86.9L443.4 87.8L486.8 78.6ZM443.2 86.9L399.9 96.2L400.1 97.1L443.4 87.8ZM659.9 46.3L616.6 55.9L616.8 56.9L660.1 47.2ZM616.6 55.9L573.2 65.6L573.4 66.5L616.8 56.9ZM573.2 65.6L529.9 75.2L530.1 76.1L573.4 66.5ZM529.9 75.2L486.6 84.9L486.8 85.8L530.1 76.1ZM486.6 84.9L443.2 94.5L443.4 95.4L486.8 85.8ZM703.2 42.4L659.9 52.4L660.1 53.4L703.4 43.3ZM659.9 52.4L616.6 62.5L616.8 63.4L660.1 53.4ZM616.6 62.5L573.2 72.6L573.4 73.5L616.8 63.4ZM573.2 72.6L529.9 82.6L530.1 83.5L573.4 73.5ZM789.9 27.5L746.6 38.1L746.8 39.0L790.1 28.5ZM746.6 38.1L703.2 48.6L703.4 49.5L746.8 39.0ZM703.2 48.6L659.9 59.1L660.1 60.0L703.4 49.5ZM659.9 59.1L616.6 69.6L616.8 70.6L660.1 60.0ZM616.6 69.6L573.2 80.2L573.4 81.1L616.8 70.6ZM789.9 33.3L746.5 44.4L746.8 45.3L790.1 34.3ZM746.5 44.4L703.2 55.4L703.5 56.3L746.8 45.3ZM703.2 55.4L659.9 66.5L660.1 67.4L703.5 56.3ZM789.9 39.7L746.5 51.3L746.8 52.3L790.1 40.7ZM746.5 51.3L703.2 62.9L703.5 63.9L746.8 52.3ZM789.9 46.8L749.2 58.3L749.5 59.2L790.1 47.7Z" fill="#e2feff" fill-opacity="0.40"/><path d="M149.3 -1.6L185.7 22.9L186.3 22.1L149.9 -2.4ZM162.0 -1.6L199.4 21.4L199.9 20.6L162.5 -2.4ZM174.7 -1.6L213.2 20.2L213.6 19.4L175.2 -2.4ZM225.1 18.2L262.7 37.9L263.2 37.1L225.5 17.3ZM239.4 17.6L278.7 36.8L279.2 36.0L239.8 16.8ZM251.3 16.0L289.7 33.6L290.1 32.7L251.7 15.1ZM289.7 33.6L328.2 51.2L328.6 50.3L290.1 32.7ZM306.1 33.0L346.4 50.3L346.8 49.5L306.5 32.2ZM346.4 50.3L386.7 67.6L387.1 66.8L346.8 49.5ZM317.0 30.3L356.4 46.3L356.8 45.4L317.3 29.5ZM356.4 46.3L395.8 62.2L396.2 61.4L356.8 45.4ZM375.3 46.1L416.7 61.9L417.0 61.1L375.6 45.2ZM416.7 61.9L458.2 77.8L458.5 76.9L417.0 61.1ZM385.0 42.6L425.5 57.3L425.8 56.4L385.3 41.7ZM425.5 57.3L466.0 72.0L466.3 71.1L425.8 56.4ZM466.0 72.0L506.5 86.7L506.8 85.8L466.3 71.1ZM434.3 53.1L473.8 66.7L474.1 65.8L434.6 52.2ZM473.8 66.7L513.3 80.4L513.6 79.5L474.1 65.8ZM513.3 80.4L552.8 94.0L553.1 93.1L513.6 79.5ZM497.7 67.2L539.4 81.0L539.7 80.1L498.0 66.3ZM539.4 81.0L581.1 94.7L581.4 93.8L539.7 80.1ZM505.1 62.5L545.7 75.3L546.0 74.4L505.3 61.6ZM545.7 75.3L586.4 88.1L586.7 87.2L546.0 74.4ZM586.4 88.1L627.1 101.0L627.4 100.1L586.7 87.2ZM627.1 101.0L667.8 113.8L668.1 112.9L627.4 100.1ZM552.1 70.2L591.7 82.1L592.0 81.2L552.4 69.2ZM591.7 82.1L631.3 94.1L631.6 93.1L592.0 81.2ZM631.3 94.1L671.0 106.0L671.3 105.1L631.6 93.1ZM671.0 106.0L710.6 118.0L710.9 117.0L671.3 105.1ZM621.6 83.7L663.6 95.8L663.9 94.9L621.8 82.7ZM663.6 95.8L705.7 108.0L706.0 107.1L663.9 94.9ZM705.7 108.0L747.8 120.2L748.1 119.3L706.0 107.1ZM667.1 89.5L708.0 100.8L708.3 99.9L667.4 88.5ZM708.0 100.8L748.9 112.2L749.2 111.3L708.3 99.9ZM748.9 112.2L789.9 123.6L790.1 122.7L749.2 111.3ZM710.3 94.2L750.1 104.8L750.4 103.9L710.6 93.3ZM750.1 104.8L789.9 115.5L790.1 114.6L750.4 103.9ZM747.4 97.0L789.9 108.0L790.1 107.0L747.6 96.1ZM183.2 116.9L139.9 125.2L140.1 126.1L183.4 117.9ZM226.6 116.2L183.2 124.8L183.4 125.7L226.8 117.2ZM183.2 124.8L139.9 133.3L140.1 134.3L183.4 125.7ZM313.2 106.6L269.9 115.5L270.1 116.4L313.4 107.5ZM269.9 115.5L226.6 124.4L226.8 125.3L270.1 116.4ZM226.6 124.4L183.2 133.2L183.4 134.2L226.8 125.3ZM183.2 133.2L139.9 142.1L140.1 143.1L183.4 134.2ZM399.9 96.2L356.6 105.4L356.8 106.3L400.1 97.1ZM356.6 105.4L313.2 114.6L313.4 115.6L356.8 106.3ZM313.2 114.6L269.9 123.9L270.1 124.8L313.4 115.6ZM269.9 123.9L226.6 133.1L226.8 134.1L270.1 124.8ZM226.6 133.1L183.2 142.4L183.4 143.3L226.8 134.1ZM183.2 142.4L139.9 151.6L140.1 152.6L183.4 143.3ZM443.2 94.5L399.9 104.1L400.1 105.1L443.4 95.4ZM399.9 104.1L356.6 113.8L356.8 114.7L400.1 105.1ZM356.6 113.8L313.2 123.4L313.4 124.3L356.8 114.7ZM313.2 123.4L269.9 133.0L270.1 134.0L313.4 124.3ZM269.9 133.0L226.6 142.7L226.8 143.6L270.1 134.0ZM529.9 82.6L486.6 92.7L486.8 93.6L530.1 83.5ZM486.6 92.7L443.2 102.7L443.4 103.7L486.8 93.6ZM443.2 102.7L399.9 112.8L400.1 113.7L443.4 103.7ZM399.9 112.8L356.6 122.9L356.8 123.8L400.1 113.7ZM356.6 122.9L313.2 132.9L313.4 133.8L356.8 123.8ZM573.2 80.2L529.9 90.7L530.1 91.6L573.4 81.1ZM529.9 90.7L486.6 101.2L486.8 102.1L530.1 91.6ZM486.6 101.2L443.2 111.7L443.4 112.7L486.8 102.1ZM443.2 111.7L399.9 122.3L400.1 123.2L443.4 112.7ZM659.9 66.5L616.5 77.5L616.8 78.4L660.1 67.4ZM616.5 77.5L573.2 88.5L573.5 89.4L616.8 78.4ZM573.2 88.5L529.9 99.6L530.1 100.5L573.5 89.4ZM529.9 99.6L486.5 110.6L486.8 111.5L530.1 100.5ZM703.2 62.9L659.9 74.5L660.1 75.4L703.5 63.9ZM659.9 74.5L616.5 86.1L616.8 87.0L660.1 75.4ZM616.5 86.1L573.2 97.7L573.5 98.6L616.8 87.0ZM749.2 58.3L708.6 69.7L708.9 70.6L749.5 59.2ZM708.6 69.7L668.0 81.2L668.3 82.1L708.9 70.6ZM668.0 81.2L627.4 92.6L627.6 93.6L668.3 82.1ZM789.9 54.7L749.2 66.8L749.5 67.7L790.1 55.6ZM749.2 66.8L708.6 78.9L708.9 79.8L749.5 67.7ZM789.9 63.5L749.2 76.4L749.5 77.3L790.1 64.4Z" fill="#e2feff" fill-opacity="0.50"/><path d="M139.7 0.7L174.8 26.8L175.4 26.0L140.3 -0.1ZM185.7 22.9L222.2 47.5L222.7 46.7L186.3 22.1ZM199.4 21.4L236.8 44.4L237.3 43.6L199.9 20.6ZM213.2 20.2L251.6 41.9L252.1 41.1L213.6 19.4ZM251.6 41.9L290.0 63.7L290.5 62.9L252.1 41.1ZM262.7 37.9L300.4 57.6L300.8 56.8L263.2 37.1ZM278.7 36.8L318.0 56.0L318.5 55.2L279.2 36.0ZM318.0 56.0L357.4 75.2L357.8 74.4L318.5 55.2ZM328.2 51.2L366.7 68.7L367.1 67.9L328.6 50.3ZM366.7 68.7L405.1 86.3L405.5 85.4L367.1 67.9ZM386.7 67.6L427.0 84.9L427.4 84.1L387.1 66.8ZM427.0 84.9L467.3 102.2L467.7 101.4L427.4 84.1ZM395.8 62.2L435.2 78.2L435.6 77.3L396.2 61.4ZM435.2 78.2L474.6 94.1L475.0 93.2L435.6 77.3ZM474.6 94.1L514.0 110.1L514.4 109.2L475.0 93.2ZM458.2 77.8L499.6 93.7L500.0 92.8L458.5 76.9ZM499.6 93.7L541.1 109.6L541.4 108.7L500.0 92.8ZM506.5 86.7L546.9 101.4L547.3 100.5L506.8 85.8ZM546.9 101.4L587.4 116.1L587.8 115.2L547.3 100.5ZM552.8 94.0L592.3 107.7L592.6 106.8L553.1 93.1ZM592.3 107.7L631.8 121.3L632.1 120.4L592.6 106.8ZM631.8 121.3L671.3 135.0L671.6 134.1L632.1 120.4ZM581.1 94.7L622.9 108.5L623.2 107.6L581.4 93.8ZM622.9 108.5L664.6 122.3L664.9 121.4L623.2 107.6ZM664.6 122.3L706.4 136.0L706.7 135.1L664.9 121.4ZM706.4 136.0L748.1 149.8L748.4 148.9L706.7 135.1ZM667.8 113.8L708.5 126.6L708.8 125.7L668.1 112.9ZM708.5 126.6L749.2 139.4L749.5 138.5L708.8 125.7ZM749.2 139.4L789.9 152.2L790.1 151.3L749.5 138.5ZM710.6 118.0L750.2 129.9L750.5 129.0L710.9 117.0ZM750.2 129.9L789.9 141.9L790.1 140.9L750.5 129.0ZM747.8 120.2L789.9 132.3L790.1 131.4L748.1 119.3ZM226.6 142.7L183.2 152.3L183.4 153.2L226.8 143.6ZM183.2 152.3L139.9 161.9L140.1 162.9L183.4 153.2ZM313.2 132.9L269.9 143.0L270.1 143.9L313.4 133.8ZM269.9 143.0L226.6 153.0L226.8 154.0L270.1 143.9ZM226.6 153.0L183.2 163.1L183.4 164.0L226.8 154.0ZM183.2 163.1L139.9 173.2L140.1 174.1L183.4 164.0ZM399.9 122.3L356.6 132.8L356.8 133.7L400.1 123.2ZM356.6 132.8L313.2 143.3L313.4 144.2L356.8 133.7ZM313.2 143.3L269.9 153.9L270.1 154.8L313.4 144.2ZM269.9 153.9L226.6 164.4L226.8 165.3L270.1 154.8ZM486.5 110.6L443.2 121.6L443.5 122.5L486.8 111.5ZM443.2 121.6L399.9 132.7L400.1 133.6L443.5 122.5ZM399.9 132.7L356.5 143.7L356.8 144.6L400.1 133.6ZM356.5 143.7L313.2 154.7L313.5 155.7L356.8 144.6ZM573.2 97.7L529.9 109.3L530.1 110.2L573.5 98.6ZM529.9 109.3L486.5 120.9L486.8 121.8L530.1 110.2ZM486.5 120.9L443.2 132.5L443.5 133.4L486.8 121.8ZM443.2 132.5L399.9 144.1L400.1 145.0L443.5 133.4ZM627.4 92.6L586.7 104.1L587.0 105.0L627.6 93.6ZM586.7 104.1L546.1 115.5L546.4 116.5L587.0 105.0ZM546.1 115.5L505.5 127.0L505.8 127.9L546.4 116.5ZM505.5 127.0L464.9 138.5L465.1 139.4L505.8 127.9ZM708.6 78.9L668.0 91.0L668.3 91.9L708.9 79.8ZM668.0 91.0L627.4 103.1L627.6 104.0L668.3 91.9ZM627.4 103.1L586.7 115.2L587.0 116.1L627.6 104.0ZM586.7 115.2L546.1 127.3L546.4 128.2L587.0 116.1ZM749.2 76.4L708.6 89.2L708.9 90.1L749.5 77.3ZM708.6 89.2L668.0 102.0L668.3 102.9L708.9 90.1ZM668.0 102.0L627.4 114.9L627.6 115.8L668.3 102.9ZM789.8 73.5L749.2 87.1L749.5 88.0L790.2 74.4ZM749.2 87.1L708.6 100.8L708.9 101.7L749.5 88.0Z" fill="#e2feff" fill-opacity="0.60"/><path d="M139.7 11.5L172.5 38.8L173.1 38.1L140.3 10.8ZM174.8 26.8L209.9 52.9L210.5 52.2L175.4 26.0ZM222.2 47.5L258.6 72.0L259.1 71.2L222.7 46.7ZM236.8 44.4L274.2 67.4L274.7 66.6L237.3 43.6ZM290.0 63.7L328.5 85.5L328.9 84.6L290.5 62.9ZM300.4 57.6L338.0 77.4L338.4 76.5L300.8 56.8ZM338.0 77.4L375.7 97.1L376.1 96.3L338.4 76.5ZM357.4 75.2L396.7 94.4L397.1 93.6L357.8 74.4ZM396.7 94.4L436.0 113.6L436.4 112.7L397.1 93.6ZM405.1 86.3L443.6 103.9L444.0 103.0L405.5 85.4ZM443.6 103.9L482.1 121.4L482.5 120.6L444.0 103.0ZM467.3 102.2L507.7 119.5L508.0 118.7L467.7 101.4ZM507.7 119.5L548.0 136.8L548.3 136.0L508.0 118.7ZM514.0 110.1L553.4 126.0L553.8 125.1L514.4 109.2ZM553.4 126.0L592.8 142.0L593.2 141.1L553.8 125.1ZM541.1 109.6L582.5 125.4L582.9 124.6L541.4 108.7ZM582.5 125.4L624.0 141.3L624.3 140.4L582.9 124.6ZM624.0 141.3L665.5 157.2L665.8 156.3L624.3 140.4ZM587.4 116.1L627.9 130.8L628.2 129.9L587.8 115.2ZM627.9 130.8L668.4 145.5L668.7 144.6L628.2 129.9ZM668.4 145.5L708.9 160.2L709.2 159.3L668.7 144.6ZM671.3 135.0L710.8 148.6L711.1 147.7L671.6 134.1ZM710.8 148.6L750.3 162.3L750.6 161.4L711.1 147.7ZM750.3 162.3L789.8 175.9L790.2 175.1L750.6 161.4ZM748.1 149.8L789.9 163.5L790.1 162.6L748.4 148.9ZM226.6 164.4L183.2 174.9L183.4 175.8L226.8 165.3ZM183.2 174.9L139.9 185.4L140.1 186.4L183.4 175.8ZM313.2 154.7L269.9 165.8L270.1 166.7L313.5 155.7ZM269.9 165.8L226.5 176.8L226.8 177.7L270.1 166.7ZM226.5 176.8L183.2 187.8L183.5 188.8L226.8 177.7ZM183.2 187.8L139.9 198.9L140.1 199.8L183.5 188.8ZM399.9 144.1L356.5 155.7L356.8 156.6L400.1 145.0ZM356.5 155.7L313.2 167.3L313.5 168.2L356.8 156.6ZM313.2 167.3L269.9 178.9L270.1 179.8L313.5 168.2ZM269.9 178.9L226.5 190.5L226.8 191.4L270.1 179.8ZM464.9 138.5L424.2 149.9L424.5 150.8L465.1 139.4ZM424.2 149.9L383.6 161.4L383.9 162.3L424.5 150.8ZM383.6 161.4L343.0 172.8L343.3 173.7L383.9 162.3ZM546.1 127.3L505.5 139.4L505.8 140.3L546.4 128.2ZM505.5 139.4L464.9 151.5L465.1 152.4L505.8 140.3ZM464.9 151.5L424.2 163.6L424.5 164.5L465.1 152.4ZM627.4 114.9L586.7 127.7L587.0 128.6L627.6 115.8ZM586.7 127.7L546.1 140.5L546.4 141.4L587.0 128.6ZM546.1 140.5L505.5 153.3L505.8 154.2L546.4 141.4ZM708.6 100.8L668.0 114.4L668.3 115.3L708.9 101.7ZM668.0 114.4L627.3 128.1L627.7 129.0L668.3 115.3ZM789.8 84.8L749.2 99.4L749.5 100.3L790.2 85.7ZM749.2 99.4L708.6 114.0L708.9 114.9L749.5 100.3ZM708.6 114.0L668.0 128.5L668.3 129.4L708.9 114.9ZM789.8 97.8L749.2 113.4L749.5 114.3L790.2 98.7Z" fill="#e2feff" fill-opacity="0.70"/><path d="M139.7 25.2L169.9 53.6L170.5 52.9L140.3 24.5ZM172.5 38.8L205.3 66.1L206.0 65.4L173.1 38.1ZM209.9 52.9L245.0 79.0L245.6 78.3L210.5 52.2ZM258.6 72.0L295.0 96.5L295.5 95.7L259.1 71.2ZM274.2 67.4L311.5 90.4L312.0 89.6L274.7 66.6ZM328.5 85.5L366.9 107.2L367.4 106.4L328.9 84.6ZM375.7 97.1L413.3 116.9L413.7 116.0L376.1 96.3ZM436.0 113.6L475.3 132.8L475.7 131.9L436.4 112.7ZM482.1 121.4L520.5 139.0L520.9 138.2L482.5 120.6ZM520.5 139.0L559.0 156.6L559.4 155.7L520.9 138.2ZM548.0 136.8L588.3 154.1L588.6 153.3L548.3 136.0ZM588.3 154.1L628.6 171.4L629.0 170.6L588.6 153.3ZM592.8 142.0L632.2 157.9L632.6 157.0L593.2 141.1ZM632.2 157.9L671.6 173.9L672.0 173.0L632.6 157.0ZM665.5 157.2L706.9 173.1L707.3 172.2L665.8 156.3ZM706.9 173.1L748.4 188.9L748.7 188.0L707.3 172.2ZM708.9 160.2L749.4 174.9L749.7 174.0L709.2 159.3ZM749.4 174.9L789.8 189.6L790.2 188.7L749.7 174.0ZM226.5 190.5L183.2 202.1L183.5 203.0L226.8 191.4ZM183.2 202.1L139.9 213.7L140.1 214.6L183.5 203.0ZM343.0 172.8L302.4 184.3L302.6 185.2L343.3 173.7ZM302.4 184.3L261.7 195.7L262.0 196.6L302.6 185.2ZM261.7 195.7L221.1 207.2L221.4 208.1L262.0 196.6ZM221.1 207.2L180.5 218.6L180.8 219.6L221.4 208.1ZM424.2 163.6L383.6 175.7L383.9 176.6L424.5 164.5ZM383.6 175.7L343.0 187.8L343.3 188.7L383.9 176.6ZM343.0 187.8L302.4 199.9L302.6 200.8L343.3 188.7ZM505.5 153.3L464.9 166.2L465.1 167.1L505.8 154.2ZM464.9 166.2L424.2 179.0L424.5 179.9L465.1 167.1ZM424.2 179.0L383.6 191.8L383.9 192.7L424.5 179.9ZM627.3 128.1L586.7 141.7L587.0 142.6L627.7 129.0ZM586.7 141.7L546.1 155.4L546.4 156.3L587.0 142.6ZM546.1 155.4L505.5 169.0L505.8 169.9L546.4 156.3ZM668.0 128.5L627.3 143.1L627.7 144.0L668.3 129.4ZM627.3 143.1L586.7 157.7L587.0 158.6L627.7 144.0ZM749.2 113.4L708.6 129.1L708.9 130.0L749.5 114.3ZM708.6 129.1L668.0 144.7L668.3 145.6L708.9 130.0ZM789.8 112.8L749.3 129.7L749.6 130.5L790.2 113.7Z" fill="#e2feff" fill-opacity="0.80"/><path d="M139.7 43.0L169.4 75.3L170.1 74.7L140.3 42.4ZM169.9 53.6L200.0 82.0L200.7 81.3L170.5 52.9ZM205.3 66.1L238.2 93.4L238.8 92.6L206.0 65.4ZM245.0 79.0L280.1 105.2L280.6 104.4L245.6 78.3ZM295.0 96.5L331.4 121.1L331.9 120.3L295.5 95.7ZM311.5 90.4L348.9 113.4L349.4 112.6L312.0 89.6ZM348.9 113.4L386.3 136.4L386.8 135.6L349.4 112.6ZM366.9 107.2L405.4 129.0L405.8 128.2L367.4 106.4ZM405.4 129.0L443.8 150.8L444.3 149.9L405.8 128.2ZM413.3 116.9L450.9 136.6L451.4 135.8L413.7 116.0ZM450.9 136.6L488.6 156.4L489.0 155.5L451.4 135.8ZM475.3 132.8L514.6 152.0L515.0 151.1L475.7 131.9ZM514.6 152.0L553.9 171.2L554.3 170.3L515.0 151.1ZM559.0 156.6L597.5 174.2L597.9 173.3L559.4 155.7ZM597.5 174.2L635.9 191.7L636.3 190.9L597.9 173.3ZM628.6 171.4L668.9 188.8L669.3 187.9L629.0 170.6ZM668.9 188.8L709.2 206.1L709.6 205.2L669.3 187.9ZM671.6 173.9L711.0 189.8L711.4 188.9L672.0 173.0ZM711.0 189.8L750.4 205.8L750.8 204.9L711.4 188.9ZM750.4 205.8L789.8 221.7L790.2 220.8L750.8 204.9ZM748.4 188.9L789.8 204.8L790.2 203.9L748.7 188.0ZM180.5 218.6L139.9 230.1L140.1 231.0L180.8 219.6ZM302.4 199.9L261.7 212.0L262.0 212.9L302.6 200.8ZM261.7 212.0L221.1 224.1L221.4 225.1L262.0 212.9ZM221.1 224.1L180.5 236.2L180.8 237.2L221.4 225.1ZM180.5 236.2L139.9 248.3L140.1 249.3L180.8 237.2ZM383.6 191.8L343.0 204.7L343.3 205.6L383.9 192.7ZM343.0 204.7L302.4 217.5L302.6 218.4L343.3 205.6ZM302.4 217.5L261.7 230.3L262.0 231.2L302.6 218.4ZM505.5 169.0L464.8 182.7L465.2 183.6L505.8 169.9ZM464.8 182.7L424.2 196.3L424.5 197.2L465.2 183.6ZM424.2 196.3L383.6 210.0L383.9 210.9L424.5 197.2ZM586.7 157.7L546.1 172.3L546.4 173.2L587.0 158.6ZM546.1 172.3L505.5 186.9L505.8 187.7L546.4 173.2ZM668.0 144.7L627.3 160.4L627.7 161.2L668.3 145.6ZM627.3 160.4L586.7 176.0L587.0 176.9L627.7 161.2ZM749.3 129.7L708.7 146.5L709.1 147.4L749.6 130.5ZM708.7 146.5L668.1 163.4L668.5 164.2L709.1 147.4ZM789.8 130.4L749.7 148.5L750.1 149.4L790.2 131.3Z" fill="#e2feff" fill-opacity="0.90"/><path d="M138.8 255.8L151.8 292.7L154.5 291.7L141.2 254.9ZM151.8 292.7L164.9 329.6L167.8 328.6L154.5 291.7ZM164.9 329.6L177.9 366.6L181.1 365.4L167.8 328.6ZM139.2 157.4L156.5 192.3L158.2 191.4L140.8 156.6ZM156.5 192.3L173.7 227.2L175.7 226.2L158.2 191.4ZM173.7 227.2L190.9 262.1L193.1 261.0L175.7 226.2ZM190.9 262.1L208.2 296.9L210.6 295.7L193.1 261.0ZM208.2 296.9L225.4 331.8L228.0 330.5L210.6 295.7ZM225.4 331.8L242.6 366.7L245.5 365.3L228.0 330.5ZM139.5 102.4L163.4 140.2L164.7 139.4L140.5 101.8ZM163.4 140.2L187.4 178.0L188.9 177.0L164.7 139.4ZM187.4 178.0L211.4 215.7L213.1 214.7L188.9 177.0ZM211.4 215.7L235.4 253.5L237.3 252.3L213.1 214.7ZM235.4 253.5L259.4 291.3L261.5 289.9L237.3 252.3ZM259.4 291.3L283.3 329.0L285.7 327.6L261.5 289.9ZM283.3 329.0L307.3 366.8L309.9 365.2L285.7 327.6ZM139.6 67.3L165.4 100.6L166.4 99.9L140.4 66.7ZM165.4 100.6L191.3 133.9L192.4 133.0L166.4 99.9ZM191.3 133.9L217.1 167.2L218.3 166.2L192.4 133.0ZM217.1 167.2L242.9 200.5L244.3 199.4L218.3 166.2ZM242.9 200.5L268.7 233.7L270.3 232.5L244.3 199.4ZM268.7 233.7L294.5 267.0L296.3 265.7L270.3 232.5ZM294.5 267.0L320.4 300.3L322.3 298.8L296.3 265.7ZM320.4 300.3L346.2 333.6L348.3 332.0L322.3 298.8ZM346.2 333.6L372.0 366.9L374.2 365.1L348.3 332.0ZM169.4 75.3L199.1 107.7L200.0 107.0L170.1 74.7ZM199.1 107.7L228.8 140.1L229.8 139.2L200.0 107.0ZM228.8 140.1L258.5 172.5L259.6 171.5L229.8 139.2ZM258.5 172.5L288.2 204.9L289.5 203.8L259.6 171.5ZM288.2 204.9L317.9 237.3L319.3 236.0L289.5 203.8ZM317.9 237.3L347.6 269.7L349.1 268.3L319.3 236.0ZM347.6 269.7L377.3 302.1L379.0 300.6L349.1 268.3ZM377.3 302.1L407.0 334.5L408.8 332.8L379.0 300.6ZM407.0 334.5L436.7 366.9L438.6 365.1L408.8 332.8ZM200.0 82.0L230.2 110.5L230.9 109.7L200.7 81.3ZM230.2 110.5L260.3 139.0L261.2 138.1L230.9 109.7ZM260.3 139.0L290.4 167.5L291.4 166.5L261.2 138.1ZM290.4 167.5L320.6 196.0L321.6 194.8L291.4 166.5ZM320.6 196.0L350.7 224.5L351.9 223.2L321.6 194.8ZM350.7 224.5L380.8 252.9L382.1 251.6L351.9 223.2ZM380.8 252.9L411.0 281.4L412.3 280.0L382.1 251.6ZM411.0 281.4L441.1 309.9L442.6 308.4L412.3 280.0ZM441.1 309.9L471.2 338.4L472.8 336.7L442.6 308.4ZM471.2 338.4L501.4 366.9L503.0 365.1L472.8 336.7ZM238.2 93.4L271.0 120.7L271.6 119.9L238.8 92.6ZM271.0 120.7L303.7 148.1L304.5 147.2L271.6 119.9ZM303.7 148.1L336.5 175.4L337.4 174.4L304.5 147.2ZM336.5 175.4L369.3 202.8L370.3 201.6L337.4 174.4ZM369.3 202.8L402.1 230.1L403.1 228.9L370.3 201.6ZM402.1 230.1L434.9 257.5L436.0 256.1L403.1 228.9ZM434.9 257.5L467.7 284.8L468.9 283.4L436.0 256.1ZM467.7 284.8L500.4 312.2L501.7 310.6L468.9 283.4ZM500.4 312.2L533.2 339.5L534.6 337.9L501.7 310.6ZM533.2 339.5L566.0 366.9L567.5 365.1L534.6 337.9ZM280.1 105.2L315.1 131.3L315.8 130.5L280.6 104.4ZM315.1 131.3L350.2 157.5L350.9 156.6L315.8 130.5ZM350.2 157.5L385.3 183.7L386.0 182.6L350.9 156.6ZM385.3 183.7L420.3 209.8L421.2 208.7L386.0 182.6ZM420.3 209.8L455.4 236.0L456.3 234.8L421.2 208.7ZM455.4 236.0L490.4 262.2L491.4 260.9L456.3 234.8ZM490.4 262.2L525.5 288.3L526.5 286.9L491.4 260.9ZM525.5 288.3L560.5 314.5L561.7 313.0L526.5 286.9ZM560.5 314.5L595.6 340.7L596.8 339.1L561.7 313.0ZM595.6 340.7L630.6 366.9L631.9 365.1L596.8 339.1ZM331.4 121.1L367.8 145.6L368.4 144.8L331.9 120.3ZM367.8 145.6L404.2 170.2L404.8 169.3L368.4 144.8ZM404.2 170.2L440.6 194.8L441.3 193.7L404.8 169.3ZM440.6 194.8L476.9 219.4L477.7 218.2L441.3 193.7ZM476.9 219.4L513.3 243.9L514.2 242.7L477.7 218.2ZM513.3 243.9L549.7 268.5L550.6 267.2L514.2 242.7ZM549.7 268.5L586.1 293.1L587.0 291.7L550.6 267.2ZM586.1 293.1L622.5 317.7L623.5 316.2L587.0 291.7ZM622.5 317.7L658.9 342.2L659.9 340.7L623.5 316.2ZM658.9 342.2L695.3 366.8L696.4 365.2L659.9 340.7ZM386.3 136.4L423.7 159.4L424.2 158.6L386.8 135.6ZM423.7 159.4L461.0 182.5L461.6 181.5L424.2 158.6ZM461.0 182.5L498.4 205.5L499.0 204.5L461.6 181.5ZM498.4 205.5L535.7 228.6L536.4 227.4L499.0 204.5ZM535.7 228.6L573.1 251.6L573.8 250.4L536.4 227.4ZM573.1 251.6L610.4 274.6L611.2 273.4L573.8 250.4ZM610.4 274.6L647.8 297.7L648.6 296.3L611.2 273.4ZM647.8 297.7L685.2 320.7L686.0 319.3L648.6 296.3ZM685.2 320.7L722.5 343.8L723.4 342.2L686.0 319.3ZM722.5 343.8L759.9 366.8L760.8 365.2L723.4 342.2ZM443.8 150.8L482.2 172.6L482.7 171.7L444.3 149.9ZM482.2 172.6L520.6 194.4L521.2 193.4L482.7 171.7ZM520.6 194.4L559.1 216.2L559.6 215.1L521.2 193.4ZM559.1 216.2L597.5 238.0L598.1 236.9L559.6 215.1ZM597.5 238.0L635.9 259.8L636.6 258.6L598.1 236.9ZM635.9 259.8L674.3 281.6L675.0 280.3L636.6 258.6ZM674.3 281.6L712.7 303.4L713.5 302.1L675.0 280.3ZM712.7 303.4L751.2 325.2L752.0 323.8L713.5 302.1ZM751.2 325.2L789.6 347.0L790.4 345.5L752.0 323.8ZM488.6 156.4L526.2 176.1L526.7 175.2L489.0 155.5ZM526.2 176.1L563.9 195.9L564.4 195.0L526.7 175.2ZM563.9 195.9L601.5 215.6L602.0 214.7L564.4 195.0ZM601.5 215.6L639.1 235.4L639.7 234.4L602.0 214.7ZM639.1 235.4L676.8 255.2L677.3 254.1L639.7 234.4ZM676.8 255.2L714.4 275.0L715.0 273.8L677.3 254.1ZM714.4 275.0L752.0 294.7L752.7 293.5L715.0 273.8ZM752.0 294.7L789.7 314.5L790.3 313.2L752.7 293.5ZM553.9 171.2L593.2 190.4L593.7 189.5L554.3 170.3ZM593.2 190.4L632.5 209.6L633.0 208.7L593.7 189.5ZM632.5 209.6L671.8 228.8L672.3 227.9L633.0 208.7ZM671.8 228.8L711.1 248.1L711.6 247.0L672.3 227.9ZM711.1 248.1L750.4 267.3L751.0 266.2L711.6 247.0ZM750.4 267.3L789.7 286.5L790.3 285.4L751.0 266.2ZM635.9 191.7L674.4 209.3L674.8 208.4L636.3 190.9ZM674.4 209.3L712.9 226.9L713.3 226.0L674.8 208.4ZM712.9 226.9L751.3 244.5L751.8 243.5L713.3 226.0ZM751.3 244.5L789.8 262.1L790.2 261.1L751.8 243.5ZM709.2 206.1L749.5 223.4L749.9 222.5L709.6 205.2ZM749.5 223.4L789.8 240.7L790.2 239.7L749.9 222.5ZM261.7 230.3L221.1 243.1L221.4 244.0L262.0 231.2ZM221.1 243.1L180.5 255.9L180.8 256.9L221.4 244.0ZM180.5 255.9L139.8 268.8L140.2 269.7L180.8 256.9ZM383.6 210.0L343.0 223.6L343.3 224.5L383.9 210.9ZM343.0 223.6L302.3 237.2L302.7 238.2L343.3 224.5ZM302.3 237.2L261.7 250.9L262.0 251.8L302.7 238.2ZM261.7 250.9L221.1 264.5L221.4 265.5L262.0 251.8ZM221.1 264.5L180.4 278.1L180.8 279.2L221.4 265.5ZM180.4 278.1L139.8 291.8L140.2 292.8L180.8 279.2ZM505.5 186.9L464.8 201.4L465.2 202.3L505.8 187.7ZM464.8 201.4L424.2 216.0L424.5 216.9L465.2 202.3ZM424.2 216.0L383.6 230.6L383.9 231.5L424.5 216.9ZM383.6 230.6L342.9 245.1L343.3 246.1L383.9 231.5ZM342.9 245.1L302.3 259.7L302.7 260.7L343.3 246.1ZM302.3 259.7L261.7 274.2L262.1 275.3L302.7 260.7ZM261.7 274.2L221.0 288.8L221.5 289.9L262.1 275.3ZM221.0 288.8L180.4 303.3L180.8 304.5L221.5 289.9ZM180.4 303.3L139.8 317.9L140.2 319.1L180.8 304.5ZM586.7 176.0L546.1 191.6L546.4 192.5L587.0 176.9ZM546.1 191.6L505.4 207.3L505.8 208.2L546.4 192.5ZM505.4 207.3L464.8 222.9L465.2 223.9L505.8 208.2ZM464.8 222.9L424.2 238.5L424.6 239.5L465.2 223.9ZM424.2 238.5L383.5 254.1L384.0 255.2L424.6 239.5ZM383.5 254.1L342.9 269.7L343.3 270.9L384.0 255.2ZM342.9 269.7L302.3 285.4L302.7 286.5L343.3 270.9ZM302.3 285.4L261.6 301.0L262.1 302.2L302.7 286.5ZM261.6 301.0L221.0 316.6L221.5 317.9L262.1 302.2ZM221.0 316.6L180.4 332.2L180.9 333.6L221.5 317.9ZM180.4 332.2L139.7 347.8L140.3 349.2L180.9 333.6ZM668.1 163.4L627.6 180.2L628.0 181.1L668.5 164.2ZM627.6 180.2L587.0 197.0L587.4 198.0L628.0 181.1ZM587.0 197.0L546.4 213.8L546.9 214.9L587.4 198.0ZM546.4 213.8L505.9 230.7L506.3 231.7L546.9 214.9ZM505.9 230.7L465.3 247.5L465.8 248.6L506.3 231.7ZM465.3 247.5L424.7 264.3L425.2 265.5L465.8 248.6ZM424.7 264.3L384.2 281.1L384.7 282.4L425.2 265.5ZM384.2 281.1L343.6 298.0L344.1 299.2L384.7 282.4ZM343.6 298.0L303.0 314.8L303.6 316.1L344.1 299.2ZM303.0 314.8L262.5 331.6L263.0 333.0L303.6 316.1ZM262.5 331.6L221.9 348.4L222.5 349.9L263.0 333.0ZM221.9 348.4L181.3 365.2L182.0 366.8L222.5 349.9ZM749.7 148.5L709.6 166.6L710.0 167.5L750.1 149.4ZM709.6 166.6L669.5 184.6L669.9 185.6L710.0 167.5ZM669.5 184.6L629.4 202.7L629.8 203.7L669.9 185.6ZM629.4 202.7L589.2 220.7L589.7 221.8L629.8 203.7ZM589.2 220.7L549.1 238.8L549.6 240.0L589.7 221.8ZM549.1 238.8L509.0 256.8L509.5 258.1L549.6 240.0ZM509.0 256.8L468.9 274.9L469.5 276.2L509.5 258.1ZM468.9 274.9L428.8 293.0L429.4 294.3L469.5 276.2ZM428.8 293.0L388.6 311.0L389.3 312.4L429.4 294.3ZM388.6 311.0L348.5 329.1L349.2 330.6L389.3 312.4ZM348.5 329.1L308.4 347.1L309.1 348.7L349.2 330.6ZM308.4 347.1L268.3 365.2L269.0 366.8L309.1 348.7ZM789.8 151.3L750.3 170.7L750.8 171.7L790.2 152.2ZM750.3 170.7L710.8 190.2L711.3 191.2L750.8 171.7ZM710.8 190.2L671.3 209.6L671.8 210.7L711.3 191.2ZM671.3 209.6L631.8 229.0L632.4 230.2L671.8 210.7ZM631.8 229.0L592.3 248.5L592.9 249.8L632.4 230.2ZM592.3 248.5L552.8 267.9L553.4 269.3L592.9 249.8ZM552.8 267.9L513.3 287.4L513.9 288.8L553.4 269.3ZM513.3 287.4L473.7 306.8L474.5 308.3L513.9 288.8ZM473.7 306.8L434.2 326.3L435.0 327.8L474.5 308.3ZM434.2 326.3L394.7 345.7L395.5 347.3L435.0 327.8ZM394.7 345.7L355.2 365.2L356.1 366.8L395.5 347.3ZM789.7 176.4L751.1 197.4L751.7 198.5L790.3 177.4ZM751.1 197.4L712.5 218.3L713.1 219.5L751.7 198.5ZM712.5 218.3L673.9 239.3L674.6 240.6L713.1 219.5ZM673.9 239.3L635.3 260.3L636.0 261.6L674.6 240.6ZM635.3 260.3L596.6 281.2L597.4 282.7L636.0 261.6ZM596.6 281.2L558.0 302.2L558.9 303.7L597.4 282.7ZM558.0 302.2L519.4 323.2L520.3 324.8L558.9 303.7ZM519.4 323.2L480.8 344.1L481.7 345.8L520.3 324.8ZM480.8 344.1L442.2 365.1L443.2 366.9L481.7 345.8ZM789.6 207.3L752.4 229.9L753.2 231.2L790.4 208.6ZM752.4 229.9L715.2 252.4L716.1 253.8L753.2 231.2ZM715.2 252.4L678.0 274.9L678.9 276.4L716.1 253.8ZM678.0 274.9L640.8 297.5L641.7 299.1L678.9 276.4ZM640.8 297.5L603.5 320.0L604.6 321.7L641.7 299.1ZM603.5 320.0L566.3 342.5L567.4 344.3L604.6 321.7ZM566.3 342.5L529.1 365.0L530.3 367.0L567.4 344.3ZM789.5 246.3L754.8 270.0L755.9 271.6L790.5 247.8ZM754.8 270.0L720.1 293.8L721.3 295.5L755.9 271.6ZM720.1 293.8L685.4 317.5L686.6 319.3L721.3 295.5ZM685.4 317.5L650.7 341.3L652.0 343.2L686.6 319.3ZM650.7 341.3L616.0 365.0L617.4 367.0L652.0 343.2ZM789.3 297.0L760.5 319.7L762.0 321.5L790.7 298.8ZM760.5 319.7L731.7 342.3L733.2 344.3L762.0 321.5ZM731.7 342.3L702.9 365.0L704.5 367.0L733.2 344.3Z" fill="#e2feff" fill-opacity="1.00"/>
<path d="M452.9 168.1L536.1 141.7L575.9 158.1L489.2 189.8Z" fill="url(#shd)" opacity=".38"/>
<path d="M416.5 81.9L470.1 70.1L511.5 85.8L455.7 97.5Z" fill="#e5e5e3"/>
<path d="M416.5 81.9L455.7 97.5L456.6 164.5L419.2 143.6Z" fill="url(#cl)"/>
<path d="M455.7 97.5L511.5 85.8L510.6 145.3L456.6 164.5Z" fill="url(#cr)"/>
</g>
</svg>
<!-- left toolbar -->
<div class="a" style="left:4px;top:9px;width:25px;height:2px;background:#393939"></div>
<div class="a" style="left:4px;top:12.5px;width:25px;height:2px;background:#393939"></div>
<div class="a" style="left:4px;top:16px;width:25px;height:2.5px;background:#393939"></div>
<svg style="left:0;top:24px" width="33" height="200" viewBox="0 24 33 200">
 <!-- frame selection cube -->
 <g fill="none" stroke="#c9cbcb" stroke-width="1.4"><path d="M6.5 33v-4.5h5M21 28.500h5.500v4.500M26.500 43v4.500h-5M11.500 47.500h-5v-4.500"/></g>
 <path d="M16.500 30l7.600 3.400v8.600l-7.600 3.800l-7.600-3.800v-8.600z" fill="#6f8583"/>
 <path d="M16.500 30l7.600 3.400l-7.600 3.500l-7.600-3.500z" fill="#87999a"/>
 <path d="M16.500 36.900l7.600-3.500v8.600l-7.600 3.800z" fill="#627a78"/>
 <!-- select arrow -->
 <path d="M12.500 58.500l0 13.500l3-2.800l2.200 4.600l2-1l-2.200-4.500l4.200-.2z" fill="#8c9997"/>
 <!-- move (active) -->
 <rect x="4" y="82" width="25" height="25" rx="3" fill="#242626"/>
 <g fill="#8fa3a8"><path d="M16.500 86.500l3 3.500h-6zM16.500 103.500l3-3.500h-6zM8 95l3.500-3v6zM25 95l-3.500-3v6z"/></g>
 <rect x="13.500" y="92" width="6" height="6" fill="#f0a030"/>
 <path d="M26.500 104.500v-2l-2 2z" fill="#ddd"/>
 <!-- rotate -->
 <g fill="none" stroke="#8c9997" stroke-width="2"><path d="M10 121a7 7 0 0 1 12.500-1.500M23 125a7 7 0 0 1-12.500 1.500"/></g>
 <path d="M23.500 116v4.500h-4.500zM9.500 130v-4.500h4.500z" fill="#8c9997"/>
 <path d="M16.500 119.500l3.500 3.500l-3.500 3.500l-3.500-3.500z" fill="#a9b6b4"/>
 <path d="M26 132v-2l-2 2z" fill="#ddd"/>
 <!-- scale -->
 <rect x="9" y="145" width="15" height="15" fill="#7f908e"/>
 <rect x="9" y="152" width="8" height="8" fill="#aebbb9"/>
 <path d="M17 151l6-6M19 144.800h4.200v4.200" stroke="#e4e8e8" stroke-width="1.400" fill="none"/>
 <rect x="4" y="166" width="25" height="1" fill="#3b3b3b"/>
 <!-- magnet -->
 <path d="M10.500 187v-6a6 6 0 0 1 12 0v6h-3.700v-6a2.300 2.300 0 0 0-4.600 0v6z" fill="#8c9997"/>
 <rect x="10" y="185.500" width="4.700" height="2" fill="#d4dada"/><rect x="18.300" y="185.500" width="4.700" height="2" fill="#d4dada"/>
 <path d="M26 190v-2l-2 2z" fill="#ddd"/>
 <rect x="4" y="195" width="25" height="1" fill="#3b3b3b"/>
 <!-- play -->
 <path d="M10.500 203l12 7l-12 7z" fill="#8c9997"/>
 <path d="M26 219v-2l-2 2z" fill="#ddd"/>
</svg>
<!-- viewport overlay buttons -->
<div class="a" style="left:42px;top:8px;width:19px;height:19px;border-radius:4px;background:#26282a"></div>
<div class="a" style="left:72px;top:8px;width:94px;height:19px;border-radius:4px;background:#26282a"></div>
<div class="a" style="left:177px;top:8px;width:19px;height:19px;border-radius:4px;background:#26282a"></div>
<div class="a" style="left:207px;top:8px;width:77px;height:19px;border-radius:4px;background:#26282a"></div>
<div class="a" style="left:295px;top:8px;width:19px;height:19px;border-radius:4px;background:#26282a"></div>
<div class="a" style="left:799px;top:8px;width:89px;height:19.500px;border-radius:4px;background:#26282a"></div>
<svg style="left:38px;top:5px" width="853" height="30" viewBox="38 5 853 30">
 <!-- settings sliders -->
 <g stroke="#cfcfcf" stroke-width="1.300"><path d="M45 14h13M45 17.700h13M45 21.500h13"/></g>
 <g fill="#cfcfcf"><rect x="52.500" y="12.300" width="2.400" height="3.400" rx="1"/><rect x="47.500" y="16" width="2.400" height="3.400" rx="1"/><rect x="52.500" y="19.800" width="2.400" height="3.400" rx="1"/></g>
 <path d="M61 27v-3l-3 3z" fill="#ddd"/>
 <!-- bulb -->
 <g fill="none" stroke="#b4b4b4" stroke-width="1.100"><path d="M79.300 21.200c0-2.200-2.300-3.200-2.300-5.700a4.200 4.200 0 0 1 8.400 0c0 2.500-2.300 3.500-2.300 5.700z"/><path d="M79.600 22.600h3.200M80 24h2.400"/></g>
 <!-- eye -->
 <path d="M180.500 17.800c3-5 10-5 13.200 0c-3.200 4.600-10.200 4.600-13.200 0z" fill="none" stroke="#a8a8a8" stroke-width="1.200"/>
 <circle cx="187" cy="17.200" r="2.800" fill="#a8a8a8"/>
 <!-- camera -->
 <g fill="#9c9c9c"><circle cx="211.500" cy="14" r="2.300"/><circle cx="217" cy="13.500" r="2.800"/><rect x="209" y="16.500" width="10.500" height="8" rx="1"/><path d="M220 20.500l3.800-3v6.800z"/></g>
 <!-- audio -->
 <circle cx="304.500" cy="17.800" r="2.700" fill="#b0b0b0"/>
 <g fill="none" stroke="#b0b0b0" stroke-width="1.200"><path d="M300.600 13.800a6 6 0 0 0 0 8M308.400 13.800a6 6 0 0 1 0 8M298.300 12.200a9 9 0 0 0 0 11.200M310.700 12.200a9 9 0 0 1 0 11.200"/></g>
 <!-- sun -->
 <path d="M806 12.600h12.200v11h-12.200z" fill="#e6eac4"/><path d="M812.100 10l6.100 5.500v5.200l-6.100 5.500l-6.100-5.500v-5.200z" fill="#e6eac4"/>
 <circle cx="812.100" cy="18" r="5.700" fill="#26280c"/>
 <circle cx="812.100" cy="18" r="4.500" fill="#bccb62"/>
 <path d="M888 27.500v-3l-3 3z" fill="#ddd"/>
</svg>
<span class="t" style="left:95.50px;top:13px;font-size:10px;line-height:11px;color:#d8d8d8;transform-origin:0 9px;transform:scale(0.8905,0.86);-webkit-text-stroke:.3px #d8d8d8;">RTX - Real-Time</span>
<span class="t" style="left:230.60px;top:13px;font-size:10px;line-height:11px;color:#d8d8d8;transform-origin:0 9px;transform:scale(0.9302,0.86);-webkit-text-stroke:.3px #d8d8d8;">Perspective</span>
<span class="t" style="left:829.40px;top:13px;font-size:10px;line-height:11px;color:#dedede;transform-origin:0 9px;transform:scale(0.9016,0.86);font-weight:bold;">Stage Lights</span>
<!-- axis gizmo + unit -->
<svg style="left:40px;top:300px" width="40" height="40" viewBox="40 300 40 40">
 <g stroke-width="1.200" fill="none"><path d="M61 326v-9" stroke="#9aa4a4"/><path d="M61 326l-8 2.700" stroke="#c06078"/><path d="M61 326l6 3.500" stroke="#9aa4a4"/></g>
</svg>
<span class="t" style="left:58.00px;top:306px;font-size:8.5px;line-height:10px;color:#aab4b4;transform-origin:0 8px;transform:scale(1.0593,1);">Z</span>
<span class="t" style="left:44.50px;top:327px;font-size:8.5px;line-height:10px;color:#c86880;transform-origin:0 8px;transform:scale(0.9701,1);">X</span>
<span class="t" style="left:67.50px;top:328px;font-size:8.5px;line-height:10px;color:#aab4b4;transform-origin:0 8px;transform:scale(0.9701,1);">Y</span>
<div class="a" style="left:50px;top:339px;width:21.500px;height:17px;background:#26282a;border-radius:2px"></div>
<span class="t" style="left:57.00px;top:342px;font-size:10px;line-height:11px;color:#d0d0d0;transform-origin:0 9px;transform:scale(0.8435,0.86);font-weight:bold;">m</span>
<!-- Stage panel -->
<div class="a" style="left:897px;top:2px;width:383px;height:17px;background:#1f2221"></div>
<div class="a" style="left:897px;top:3px;width:51px;height:16px;background:#454545;border-radius:3px 3px 0 0"></div>
<div class="a" style="left:951px;top:3px;width:51px;height:16px;background:#2e3030;border-radius:3px 3px 0 0"></div>
<div class="a" style="left:1005px;top:3px;width:96px;height:16px;background:#2e3030;border-radius:3px 3px 0 0"></div>
<span class="t" style="left:902.50px;top:6px;font-size:10px;line-height:11px;color:#e2e2e2;transform-origin:0 9px;transform:scale(0.9566,0.86);-webkit-text-stroke:.3px #e2e2e2;">Stage</span>
<span class="t" style="left:957.50px;top:6px;font-size:10px;line-height:11px;color:#a2a2a2;transform-origin:0 9px;transform:scale(0.9394,0.86);">Layer</span>
<span class="t" style="left:1010.60px;top:6px;font-size:10px;line-height:11px;color:#a2a2a2;transform-origin:0 9px;transform:scale(0.9678,0.86);">Render Settings</span>
<div class="a" style="left:900px;top:26.700px;width:341px;height:17.600px;background:#1f2121"></div>
<svg style="left:905px;top:28px" width="14" height="14" viewBox="905 28 14 14"><circle cx="912" cy="34.800" r="2.700" fill="none" stroke="#424444" stroke-width="1.400"/><path d="M914 37l2.300 2.500" stroke="#424444" stroke-width="1.500"/></svg>
<span class="t" style="left:922.00px;top:30px;font-size:10px;line-height:11px;color:#474949;transform-origin:0 9px;transform:scale(0.9310,0.86);">Search</span>
<svg style="left:1244px;top:27px" width="34" height="16" viewBox="1244 27 34 16">
 <path d="M1247.500 29.500h11l-4.300 5v5.200l-2.400-1.600v-3.600z" fill="#b4b4b4"/>
 <path d="M1260 41.500v-2.200l-2.200 2.200z" fill="#b4b4b4"/>
 <path d="M1265 30.800h9.500M1265 34h9.500M1265 37.200h9.500" stroke="#b9b9b9" stroke-width="1.300"/>
</svg>
<div class="a" style="left:897px;top:46px;width:383px;height:5px;background:#4d4d4d"></div>
<div class="a" style="left:900px;top:51px;width:377px;height:336px;background:#1f2221"></div>
<div class="a" style="left:900px;top:51px;width:368px;height:10px;background:#393b3b"></div>
<div class="a" style="left:1176px;top:61px;width:1px;height:316px;background:#2c2e2e"></div>
<div class="a" style="left:1194px;top:61px;width:1px;height:316px;background:#2c2e2e"></div>
<span class="t" style="left:907.60px;top:52px;font-size:7.7px;line-height:9px;color:#e6e6e6;transform-origin:0 7px;transform:scale(1.0212,1);font-weight:bold;">Name (Old to New)</span>
<span class="t" style="left:1201.00px;top:52px;font-size:7.7px;line-height:9px;color:#e6e6e6;transform-origin:0 7px;transform:scale(0.9482,1);font-weight:bold;">Type</span>
<span class="t" style="left:932.60px;top:63px;font-size:10px;line-height:11px;color:#a9a9a9;transform-origin:0 9px;transform:scale(0.9622,0.86);">World (defaultPrim)</span>
<span class="t" style="left:947.50px;top:78px;font-size:10px;line-height:11px;color:#a9a9a9;transform-origin:0 9px;transform:scale(0.9732,0.86);">ActionGraph</span>
<span class="t" style="left:947.50px;top:93px;font-size:10px;line-height:11px;color:#a9a9a9;transform-origin:0 9px;transform:scale(0.9202,0.86);">Cube</span>
<span class="t" style="left:962.70px;top:108px;font-size:10px;line-height:11px;color:#a9a9a9;transform-origin:0 9px;transform:scale(0.9413,0.86);">Contact_Sensor</span>
<span class="t" style="left:932.60px;top:123px;font-size:10px;line-height:11px;color:#a9a9a9;transform-origin:0 9px;transform:scale(0.9850,0.86);">Environment</span>
<span class="t" style="left:932.60px;top:138px;font-size:10px;line-height:11px;color:#a9a9a9;transform-origin:0 9px;transform:scale(0.9533,0.86);">FlatGrid</span>
<span class="t" style="left:1200.00px;top:63px;font-size:10px;line-height:11px;color:#a9a9a9;transform-origin:0 9px;transform:scale(0.9373,0.86);">Xform</span>
<span class="t" style="left:1200.00px;top:78px;font-size:10px;line-height:11px;color:#a9a9a9;transform-origin:0 9px;transform:scale(0.9442,0.86);">OmniGraph</span>
<span class="t" style="left:1200.00px;top:93px;font-size:10px;line-height:11px;color:#a9a9a9;transform-origin:0 9px;transform:scale(0.9324,0.86);">Mesh</span>
<div class="a" style="left:1200px;top:106px;width:68px;height:14px;overflow:hidden"><span class="t" style="left:0.00px;top:2px;font-size:10px;line-height:11px;color:#a9a9a9;transform-origin:0 9px;transform:scale(0.9388,0.86);">IsaacContactSen</span></div>
<span class="t" style="left:1200.00px;top:123px;font-size:10px;line-height:11px;color:#a9a9a9;transform-origin:0 9px;transform:scale(0.9373,0.86);">Xform</span>
<span class="t" style="left:1200.00px;top:138px;font-size:10px;line-height:11px;color:#a9a9a9;transform-origin:0 9px;transform:scale(0.9373,0.86);">Xform</span>
<!-- scrollbar -->
<div class="a" style="left:902px;top:380px;width:364px;height:5px;border-radius:2.500px;background:#a6a6a6"></div>
<svg style="left:900px;top:50px" width="300" height="100" viewBox="900 50 300 100">
 <g transform="translate(1184.500 56.300)"><path d="M-5.500 0c2.500-4 8.500-4 11 0c-2.500 3.800-8.500 3.800-11 0z" fill="none" stroke="#8d8f8f" stroke-width="1"/><circle cx="0" cy="-.3" r="2.200" fill="#8d8f8f"/></g><g transform="translate(1184.500 68.500)"><path d="M-5.500 0c2.500-4 8.500-4 11 0c-2.500 3.800-8.500 3.800-11 0z" fill="none" stroke="#8d8f8f" stroke-width="1"/><circle cx="0" cy="-.3" r="2.200" fill="#8d8f8f"/></g><g transform="translate(1184.500 98.500)"><path d="M-5.500 0c2.500-4 8.500-4 11 0c-2.500 3.800-8.500 3.800-11 0z" fill="none" stroke="#8d8f8f" stroke-width="1"/><circle cx="0" cy="-.3" r="2.200" fill="#8d8f8f"/></g><g transform="translate(1184.500 113.400)"><path d="M-5.500 0c2.500-4 8.500-4 11 0c-2.500 3.800-8.500 3.800-11 0z" fill="none" stroke="#8d8f8f" stroke-width="1"/><circle cx="0" cy="-.3" r="2.200" fill="#8d8f8f"/></g><g transform="translate(1184.500 128.500)"><path d="M-5.500 0c2.500-4 8.500-4 11 0c-2.500 3.800-8.500 3.800-11 0z" fill="none" stroke="#8d8f8f" stroke-width="1"/><circle cx="0" cy="-.3" r="2.200" fill="#8d8f8f"/></g><g transform="translate(1184.500 143.400)"><path d="M-5.500 0c2.500-4 8.500-4 11 0c-2.500 3.800-8.500 3.800-11 0z" fill="none" stroke="#8d8f8f" stroke-width="1"/><circle cx="0" cy="-.3" r="2.200" fill="#8d8f8f"/></g>
 <g transform="translate(903.600 65.200)"><rect x="0" y="0" width="7.600" height="7.300" rx="1" fill="#a4a6a6"/><rect x="1.400" y="3" width="4.800" height="1.400" fill="#1f2123"/></g>
 <g transform="translate(922 70.300)"><path d="M0 0v-6.800" stroke="#5fd6a0" stroke-width="1.700"/><path d="M0 0l-5.300 3.300" stroke="#3fb4e6" stroke-width="1.700"/><path d="M0 0l5.600 3.300" stroke="#d0607e" stroke-width="1.700"/></g>
 <!-- action graph icon -->
 <g transform="translate(936.600 83.800)"><path d="M-5.200-5.300h9.400a1.600 1.600 0 0 1 1.600 1.600v1.900l1.700 1.800l-1.700 1.800v2.200a1.600 1.600 0 0 1-1.600 1.600h-9.400a1.600 1.600 0 0 1-1.600-1.600v-2.400l1.900-1.600l-1.900-1.600v-2.100a1.600 1.600 0 0 1 1.600-1.600z" fill="#1f2d28" stroke="#3fc08e" stroke-width="1.500" stroke-linejoin="round"/><path d="M-6-4.300h11" stroke="#3fc08e" stroke-width="2"/></g>
 <g transform="translate(918.400 94.800)"><rect x="0" y="0" width="7.600" height="7.300" rx="1" fill="#a4a6a6"/><rect x="1.400" y="3" width="4.800" height="1.400" fill="#1f2123"/></g>
 <g transform="translate(930.600 92)"><path d="M6.300 0l6.300 2.900v6.900l-6.300 2.900l-6.300-2.900v-6.900z" fill="#626866"/><path d="M6.300 0l6.300 2.900l-6.300 2.900l-6.300-2.900z" fill="#727876"/><path d="M6.300 5.800l6.300-2.900v6.900l-6.300 2.900z" fill="#555b59"/></g>
 <g transform="translate(945.500 107.300)"><path d="M6.300 0l6.300 2.900v6.900l-6.300 2.900l-6.300-2.900v-6.900z" fill="#626866"/><path d="M6.300 0l6.300 2.900l-6.300 2.900l-6.300-2.900z" fill="#727876"/><path d="M6.300 5.800l6.300-2.900v6.900l-6.300 2.900z" fill="#555b59"/></g>
 <g transform="translate(903.600 125.200)"><rect x="0" y="0" width="7.600" height="7.300" rx="1" fill="#a4a6a6"/><rect x="1.400" y="3" width="4.800" height="1.400" fill="#1f2123"/><rect x="3.100" y="1.300" width="1.400" height="4.800" fill="#1f2123"/></g>
 <g transform="translate(922 130.200)"><path d="M0 0v-6.800" stroke="#5fd6a0" stroke-width="1.700"/><path d="M0 0l-5.300 3.300" stroke="#3fb4e6" stroke-width="1.700"/><path d="M0 0l5.600 3.300" stroke="#d0607e" stroke-width="1.700"/></g>
 <g transform="translate(903.600 140.100)"><rect x="0" y="0" width="7.600" height="7.300" rx="1" fill="#a4a6a6"/><rect x="1.400" y="3" width="4.800" height="1.400" fill="#1f2123"/><rect x="3.100" y="1.300" width="1.400" height="4.800" fill="#1f2123"/></g>
 <g transform="translate(922 145.800)"><path d="M0 0v-6.800" stroke="#5fd6a0" stroke-width="1.700"/><path d="M0 0l-5.300 3.300" stroke="#3fb4e6" stroke-width="1.700"/><path d="M0 0l5.600 3.300" stroke="#d0607e" stroke-width="1.700"/></g>
 <path d="M917 144.500c.3-3.600 3-5 6-4.600v-2l4 3.400l-4 3.200v-1.900c-1.800-.2-3.200.3-3.800 2z" fill="#f09a30"/>
</svg>
<!-- bottom-left dock: tabs -->
<div class="a" style="left:0;top:363px;width:894px;height:17px;background:#202222"></div>
<div class="a" style="left:0;top:363.500px;width:97px;height:16.500px;background:#2e3030;border-radius:0 3px 0 0"></div>
<div class="a" style="left:101px;top:363.500px;width:63px;height:16.500px;background:#2e3030;border-radius:3px 3px 0 0"></div>
<div class="a" style="left:166.500px;top:363.500px;width:61px;height:16.500px;background:#2e3030;border-radius:3px 3px 0 0"></div>
<div class="a" style="left:230.500px;top:363.500px;width:110px;height:16.500px;background:#2e3030;border-radius:3px 3px 0 0"></div>
<div class="a" style="left:343.700px;top:363.500px;width:83.500px;height:16.500px;background:#454545;border-radius:3px 3px 0 0"></div>
<span class="t" style="left:6.20px;top:367px;font-size:10px;line-height:11px;color:#9e9e9e;transform-origin:0 9px;transform:scale(0.9167,0.86);">Isaac Sim Assets</span>
<span class="t" style="left:106.70px;top:367px;font-size:10px;line-height:11px;color:#9e9e9e;transform-origin:0 9px;transform:scale(1.0050,0.86);">Content</span>
<span class="t" style="left:172.30px;top:367px;font-size:10px;line-height:11px;color:#9e9e9e;transform-origin:0 9px;transform:scale(0.9267,0.86);">Console</span>
<span class="t" style="left:236.50px;top:367px;font-size:10px;line-height:11px;color:#9e9e9e;transform-origin:0 9px;transform:scale(0.9162,0.86);">Isaac Sim Examples</span>
<span class="t" style="left:349.50px;top:367px;font-size:10px;line-height:11px;color:#dcdcdc;transform-origin:0 9px;transform:scale(0.9680,0.86);-webkit-text-stroke:.3px #dcdcdc;">Action Graph</span>
<!-- action graph toolbar -->
<svg style="left:0;top:388px" width="200" height="26" viewBox="0 388 200 26">
 <path d="M12.700 395.500v10.500M7.500 400.700h10.500" stroke="#d6d6d6" stroke-width="2.300"/>
 <path d="M27 406l.9-3.200l6-6.200l2.400 2.400l-6.100 6.100z" fill="#b9b9b9"/><path d="M34.600 395.900l.9-.9a1 1 0 0 1 1.400 0l1 1a1 1 0 0 1 0 1.400l-.9.900z" fill="#b9b9b9"/>
 <rect x="43.500" y="391" width="1" height="19" fill="#5e5e5e"/>
 <g fill="#c6c6c6"><circle cx="52.400" cy="400.800" r="1.300"/><circle cx="56" cy="400.800" r="1.300"/><circle cx="59.600" cy="400.800" r="1.300"/><circle cx="71.500" cy="400.800" r="1.300"/><circle cx="75.100" cy="400.800" r="1.300"/><circle cx="91" cy="400.800" r="1.300"/></g>
 <g fill="#353737"><circle cx="78.800" cy="400.800" r="1.300"/><circle cx="94.600" cy="400.800" r="1.300"/><circle cx="98.200" cy="400.800" r="1.300"/></g>
 <rect x="106.200" y="391" width="1" height="19" fill="#5e5e5e"/>
</svg>
<span class="t" style="left:112.20px;top:395px;font-size:10px;line-height:11px;color:#cacaca;transform-origin:0 9px;transform:scale(0.9053,0.86);">Edit</span>
<span class="t" style="left:134.40px;top:395px;font-size:10px;line-height:11px;color:#cacaca;transform-origin:0 9px;transform:scale(0.9072,0.86);">View</span>
<span class="t" style="left:873.00px;top:394px;font-size:13.5px;line-height:15px;color:#cfcfcf;transform-origin:0 12px;transform:scale(0.8488,1);font-weight:bold;">?</span>
<span class="t" style="left:58.60px;top:421px;font-size:10px;line-height:11px;color:#4db4d6;transform-origin:0 9px;transform:scale(0.9029,0.86);">Nodes</span>
<div class="a" style="left:93.300px;top:422.500px;width:1.500px;height:7px;background:#c4c4c4"></div>
<span class="t" style="left:103.90px;top:421px;font-size:10px;line-height:11px;color:#a6a6a6;transform-origin:0 9px;transform:scale(0.9353,0.86);">Variables</span>
<!-- search -->
<div class="a" style="left:3px;top:437.300px;width:188px;height:20px;background:#1f2221;border:1.500px solid #3f86a6"></div>
<span class="t" style="left:10.60px;top:443px;font-size:10.3px;line-height:11px;color:#dedede;transform-origin:0 9px;transform:scale(1.0181,0.86);-webkit-text-stroke:.3px #dedede;">print</span>
<svg style="left:175px;top:441px" width="13" height="13" viewBox="175 441 13 13"><path d="M177.600 443.700l7.600 7.600M185.200 443.700l-7.600 7.600" stroke="#cdcdcd" stroke-width="2.300"/></svg>
<!-- node list panel -->
<div class="a" style="left:3px;top:458px;width:187px;height:319px;background:#1f2221"></div>
<div class="a" style="left:181.500px;top:458px;width:8.500px;height:319px;background:#242626"></div>
<!-- graph canvas -->
<div class="a" style="left:197.500px;top:417px;width:693.500px;height:360px;background:#1f2221"></div>
<div class="a" style="left:190.500px;top:579px;width:7px;height:36px;background:#2c2e2e"></div>
<span class="t" style="left:192.00px;top:594px;font-size:6.5px;line-height:7px;color:#bdbdbd;transform-origin:0 6px;transform:scale(0.9220,1);">&lt;</span>
<svg style="left:202px;top:421px" width="14" height="14" viewBox="202 421 14 14">
 <g transform="translate(208.400 427.600) scale(.8)"><path d="M-5.200-5.300h9.400a1.600 1.600 0 0 1 1.600 1.600v1.900l1.700 1.800l-1.700 1.800v2.200a1.600 1.600 0 0 1-1.600 1.600h-9.400a1.600 1.600 0 0 1-1.600-1.600v-2.400l1.900-1.600l-1.900-1.600v-2.100a1.600 1.600 0 0 1 1.600-1.600z" fill="#1f2d28" stroke="#3fc08e" stroke-width="1.400" stroke-linejoin="round"/><path d="M-6-4.300h11" stroke="#3fc08e" stroke-width="2"/></g>
 <path d="M215 434.500v-2l-2 2z" fill="#bbb"/>
</svg>
<span class="t" style="left:218.70px;top:422px;font-size:10px;line-height:11px;color:#9c9c9c;transform-origin:0 9px;transform:scale(0.9624,0.86);">ActionGraph</span>
<!-- bottom -->
<div class="a" style="left:0;top:780px;width:1280px;height:2px;background:#1f2121"></div>
<!-- node list rows -->
<div class="a" style="left:3px;top:458.800px;width:178.500px;height:30.700px;background:#3a3c3c"></div>
<div class="a" style="left:3px;top:489.500px;width:178.500px;height:37.500px;background:#2f7c95"></div>
<div class="a" style="left:3px;top:527.500px;width:178.500px;height:30px;background:#3a3c3c"></div>
<div class="a" style="left:32px;top:557px;width:149.500px;height:1px;background:#2e6c7c"></div>
<div class="a" style="left:3px;top:596px;width:178.500px;height:30px;background:#3a3c3c"></div>
<!-- category icon boxes -->
<div class="a" style="left:32.800px;top:459px;width:30px;height:29.500px;background:#242c30;border:1px solid #a04464;border-radius:5px 0 5px 0"></div>
<div class="a" style="left:32.800px;top:527.500px;width:30px;height:29.500px;background:#22303a;border:1px solid #3fc890;border-radius:5px 0 5px 0"></div>
<div class="a" style="left:32.800px;top:596.300px;width:30px;height:29.500px;background:#22303a;border:1px solid #3fc890;border-radius:5px 0 5px 0"></div>
<!-- item icon boxes -->
<div class="a" style="left:7.500px;top:493.800px;width:29.500px;height:29.500px;background:#22303c;border:1px solid #22303c;border-right-color:#a04c6c;border-bottom-color:#a04c6c;border-radius:5px 0 5px 0"></div>
<div class="a" style="left:7px;top:561.500px;width:30px;height:29.500px;background:#22303a;border:1px solid #3fc890;border-radius:5px 0 5px 0"></div>
<div class="a" style="left:7px;top:630px;width:30px;height:30px;background:#22303a;border:1px solid #3fc890;border-radius:5px 0 5px 0;overflow:hidden">
 <div class="a" style="left:0;top:12.500px;width:30px;height:11.500px;background:#2c5c16"></div>
 <div class="a" style="left:0;top:14.500px;width:30px;height:1px;background:#a4c828"></div>
 <div class="a" style="left:0;top:20.500px;width:30px;height:1px;background:#a4c828"></div>
</div>
<svg style="left:0;top:458px" width="190" height="210" viewBox="0 458 190 210">
 <g transform="translate(18 474)"><path d="M-5 -2.800l5 5.300l5-5.300" fill="none" stroke="#e4e4e4" stroke-width="1.700"/></g><g transform="translate(18 542.500)"><path d="M-5 -2.800l5 5.300l5-5.300" fill="none" stroke="#e4e4e4" stroke-width="1.700"/></g><g transform="translate(18 611)"><path d="M-5 -2.800l5 5.300l5-5.300" fill="none" stroke="#e4e4e4" stroke-width="1.700"/></g>
 <g transform="translate(46.800 472.300)"><circle cx="0" cy="0" r="7.200" fill="none" stroke="#c0567a" stroke-width="1.100"/><path d="M5 5l4.600 4.800" stroke="#c0567a" stroke-width="1.500"/><ellipse cx="0" cy=".6" rx="1.700" ry="2.200" fill="#bdbdbd"/><circle cx="0" cy="-2" r="1.100" fill="#bdbdbd"/><path d="M-1.400-2.600l-1.200-1.300M1.400-2.600l1.200-1.300M-1.700.6h-2M1.700.6h2M-1.500 2.200l-1.500 1.400M1.500 2.200l1.500 1.400" stroke="#bdbdbd" stroke-width=".7"/></g>
 <g transform="translate(20.900 506.700)"><circle cx="0" cy="0" r="7.200" fill="none" stroke="#c0567a" stroke-width="1.100"/><path d="M5 5l4.600 4.800" stroke="#c0567a" stroke-width="1.500"/><ellipse cx="0" cy=".6" rx="1.700" ry="2.200" fill="#bdbdbd"/><circle cx="0" cy="-2" r="1.100" fill="#bdbdbd"/><path d="M-1.400-2.600l-1.200-1.300M1.400-2.600l1.200-1.300M-1.700.6h-2M1.700.6h2M-1.500 2.200l-1.500 1.400M1.500 2.200l1.500 1.400" stroke="#bdbdbd" stroke-width=".7"/></g>
 <g transform="translate(47.300 542.300)"><path d="M-5.200-5.300h9.400a1.600 1.600 0 0 1 1.600 1.600v1.900l1.700 1.800l-1.700 1.800v2.200a1.600 1.600 0 0 1-1.600 1.600h-9.400a1.600 1.600 0 0 1-1.600-1.600v-2.400l1.900-1.600l-1.900-1.600v-2.100a1.600 1.600 0 0 1 1.600-1.600z" fill="none" stroke="#b4baba" stroke-width="1.500" stroke-linejoin="round"/><path d="M-6-4.600h11" stroke="#b4baba" stroke-width="1.600"/><circle cx="5.700" cy="0" r="1.100" fill="#22303a" stroke="#b4baba" stroke-width=".8"/></g>
 <g transform="translate(21.500 576.300)"><path d="M-5.200-5.300h9.400a1.600 1.600 0 0 1 1.600 1.600v1.900l1.700 1.800l-1.700 1.800v2.200a1.600 1.600 0 0 1-1.600 1.600h-9.400a1.600 1.600 0 0 1-1.600-1.600v-2.400l1.900-1.600l-1.900-1.600v-2.100a1.600 1.600 0 0 1 1.600-1.600z" fill="none" stroke="#b4baba" stroke-width="1.500" stroke-linejoin="round"/><path d="M-6-4.600h11" stroke="#b4baba" stroke-width="1.600"/><circle cx="5.700" cy="0" r="1.100" fill="#22303a" stroke="#b4baba" stroke-width=".8"/></g>
 <g transform="translate(47.300 611)"><path d="M-5.200-5.300h9.400a1.600 1.600 0 0 1 1.600 1.600v1.900l1.700 1.800l-1.700 1.800v2.200a1.600 1.600 0 0 1-1.600 1.600h-9.400a1.600 1.600 0 0 1-1.600-1.600v-2.400l1.900-1.600l-1.900-1.600v-2.100a1.600 1.600 0 0 1 1.600-1.600z" fill="none" stroke="#b4baba" stroke-width="1.500" stroke-linejoin="round"/><path d="M-6-4.600h11" stroke="#b4baba" stroke-width="1.600"/><circle cx="5.700" cy="0" r="1.100" fill="#22303a" stroke="#b4baba" stroke-width=".8"/></g>
 <!-- rtx sensor icon -->
 <g fill="#e4e4e4"><rect x="15.500" y="636.500" width="12" height="5" rx="1.500"/><rect x="19.800" y="641" width="3.400" height="9"/><rect x="13.500" y="649.500" width="16" height="3.600"/><circle cx="24.500" cy="639" r="1.200" fill="#22303a"/></g>
 <path d="M12.500 637.500h3M12.500 640.500h3" stroke="#e4e4e4" stroke-width="1"/>
</svg>
<span class="t" style="left:70.60px;top:468px;font-size:10px;line-height:11px;color:#d4d4d4;transform-origin:0 9px;transform:scale(0.9332,0.86);-webkit-text-stroke:.3px #d4d4d4;">Debug</span>
<span class="t" style="left:169.00px;top:468px;font-size:10px;line-height:11px;color:#d4d4d4;transform-origin:0 9px;transform:scale(0.6653,0.86);-webkit-text-stroke:.3px #d4d4d4;">1</span>
<span class="t" style="left:44.30px;top:494px;font-size:10px;line-height:11px;color:#d6e4ea;transform-origin:0 9px;transform:scale(1.0048,0.86);">Print Text</span>
<span class="t" style="left:44.30px;top:510px;font-size:10px;line-height:11px;color:#4c8ca4;transform-origin:0 9px;transform:scale(0.9726,0.86);">Prints some te...t to the screen</span>
<span class="t" style="left:70.60px;top:537px;font-size:10px;line-height:11px;color:#d4d4d4;transform-origin:0 9px;transform:scale(1.0313,0.86);-webkit-text-stroke:.3px #d4d4d4;">Internal</span>
<span class="t" style="left:169.00px;top:537px;font-size:10px;line-height:11px;color:#d4d4d4;transform-origin:0 9px;transform:scale(0.6653,0.86);-webkit-text-stroke:.3px #d4d4d4;">1</span>
<span class="t" style="left:44.30px;top:563px;font-size:10px;line-height:11px;color:#d8d8d8;transform-origin:0 9px;transform:scale(0.9553,0.86);-webkit-text-stroke:.3px #d8d8d8;">Sd Test Print Raw Array</span>
<span class="t" style="left:44.30px;top:578px;font-size:10px;line-height:11px;color:#8c8c8c;transform-origin:0 9px;transform:scale(0.9806,0.86);">Synthetic Data...ut linear array</span>
<span class="t" style="left:70.60px;top:606px;font-size:10px;line-height:11px;color:#d4d4d4;transform-origin:0 9px;transform:scale(0.9235,0.86);-webkit-text-stroke:.3px #d4d4d4;">Isaac Sensor</span>
<span class="t" style="left:169.00px;top:606px;font-size:10px;line-height:11px;color:#d4d4d4;transform-origin:0 9px;transform:scale(0.6653,0.86);-webkit-text-stroke:.3px #d4d4d4;">1</span>
<span class="t" style="left:44.30px;top:632px;font-size:10px;line-height:11px;color:#d8d8d8;transform-origin:0 9px;transform:scale(0.9308,0.86);-webkit-text-stroke:.3px #d8d8d8;">Isaac Print RTX Sensor Info</span>
<span class="t" style="left:44.30px;top:647px;font-size:10px;line-height:11px;color:#8c8c8c;transform-origin:0 9px;transform:scale(0.9354,0.86);">Print raw RTX s...niGraph node.</span>
<!-- property panel -->
<div class="a" style="left:894px;top:390px;width:386px;height:19.600px;background:#202222"></div>
<div class="a" style="left:897px;top:394.200px;width:62.700px;height:16px;background:#454545;border-radius:3px 3px 0 0"></div>
<div class="a" style="left:962.800px;top:394.400px;width:132.200px;height:15.200px;background:#2e3030;border-radius:3px 3px 0 0"></div>
<div class="a" style="left:1097.800px;top:394.400px;width:135.200px;height:15.200px;background:#2e3030;border-radius:3px 3px 0 0"></div>
<span class="t" style="left:902.80px;top:397px;font-size:10px;line-height:11px;color:#e2e2e2;transform-origin:0 9px;transform:scale(0.9684,0.86);-webkit-text-stroke:.3px #e2e2e2;">Property</span>
<span class="t" style="left:969.00px;top:397px;font-size:10px;line-height:11px;color:#a2a2a2;transform-origin:0 9px;transform:scale(0.9620,0.86);">Synthetic Data Recorder</span>
<span class="t" style="left:1104.00px;top:397px;font-size:10px;line-height:11px;color:#a2a2a2;transform-origin:0 9px;transform:scale(0.9457,0.86);">Semantics Schema Editor</span>
<div class="a" style="left:906px;top:414.400px;width:358.400px;height:17px;background:#222424"></div>
<svg style="left:911px;top:416px" width="14" height="14" viewBox="911 416 14 14"><circle cx="918" cy="422.300" r="2.700" fill="none" stroke="#424444" stroke-width="1.400"/><path d="M920 424.500l2.300 2.500" stroke="#424444" stroke-width="1.500"/></svg>
<span class="t" style="left:928.40px;top:417px;font-size:10px;line-height:11px;color:#474949;transform-origin:0 9px;transform:scale(0.9184,0.86);">Search</span>
</body></html>
